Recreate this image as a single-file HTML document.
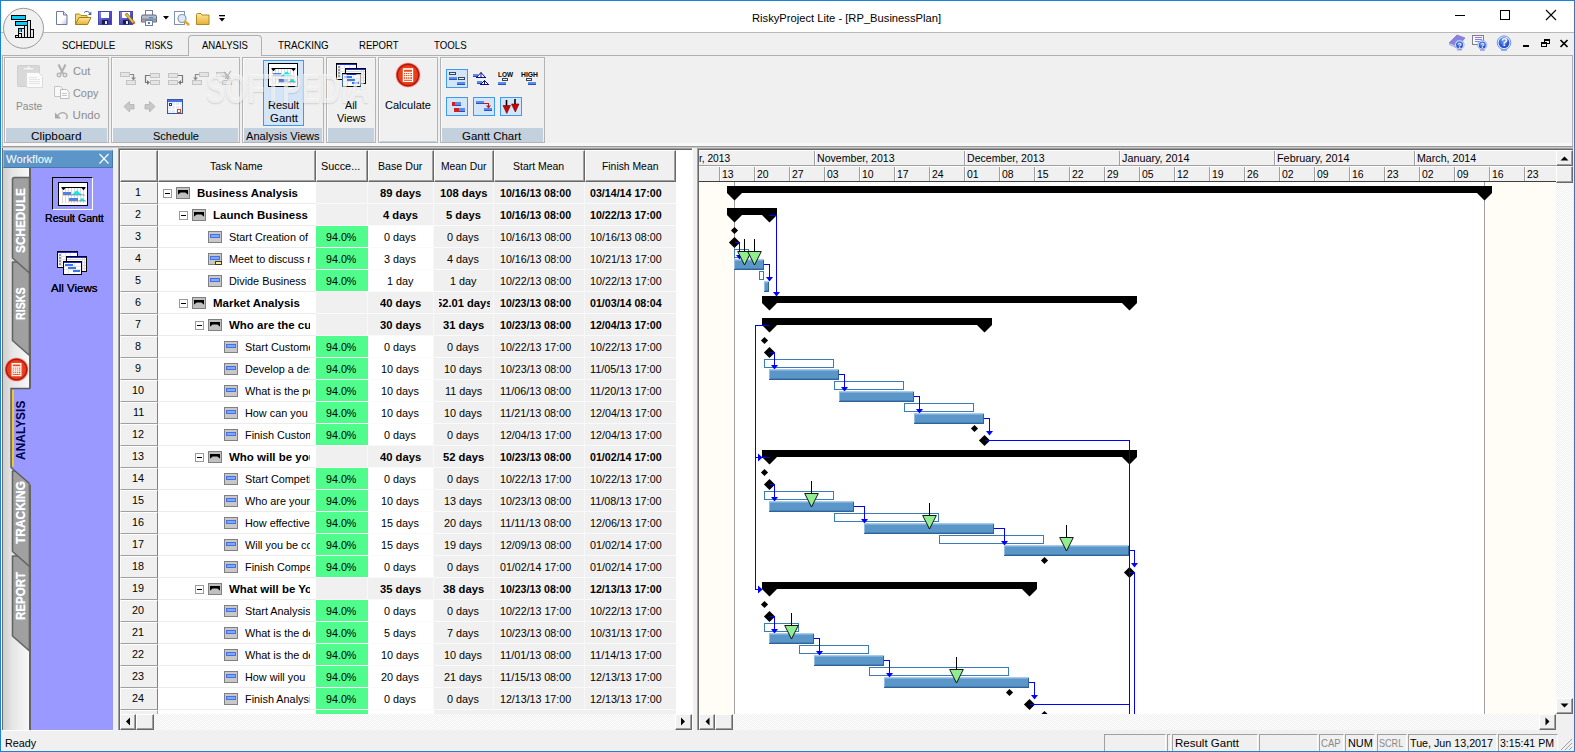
<!DOCTYPE html>
<html lang="en"><head><meta charset="utf-8"><title>RiskyProject Lite - [RP_BusinessPlan]</title>
<style>
html,body{margin:0;padding:0;background:#f0f0f0;}
body{width:1575px;height:752px;overflow:hidden;font-family:"Liberation Sans",sans-serif;}
#app{position:relative;width:1575px;height:752px;overflow:hidden;background:#f0f0f0;}
#app div,#app span.t,#app svg{position:absolute;box-sizing:border-box;}
span.t{white-space:pre;transform-origin:0 0;display:block;}
svg{overflow:visible;}
.grp{border:1px solid #b4b4b4;background:#f0f0f0;box-shadow:inset 1px 1px 0 #fafafa;}
.cap{background:#c3d0de;}
.hdr{background:#f0f0f0;border-top:1px solid #fff;border-left:1px solid #fff;border-right:1px solid #696969;border-bottom:1px solid #696969;box-shadow:inset -1px -1px 0 #a0a0a0;}
.rh{background:#f0f0f0;border-top:1px solid #fff;border-left:1px solid #fff;border-right:1px solid #808080;border-bottom:1px solid #a0a0a0;}
.sbtn{background:#f0f0f0;border-top:1px solid #fff;border-left:1px solid #fff;border-right:1px solid #696969;border-bottom:1px solid #696969;box-shadow:inset -1px -1px 0 #a0a0a0;}
.chk{background-color:#fff;background-image:linear-gradient(45deg,#f0f0f0 25%,transparent 25%,transparent 75%,#f0f0f0 75%),linear-gradient(45deg,#f0f0f0 25%,transparent 25%,transparent 75%,#f0f0f0 75%);background-size:2px 2px;background-position:0 0,1px 1px;}
.pane{border-top:1px solid #a0a0a0;border-left:1px solid #a0a0a0;border-right:1px solid #fff;border-bottom:1px solid #fff;}
.tg{background:#50fc8c;}
.hl{background:#d4e5f7;border:1px solid #3b9bf0;}

</style></head>
<body>
<div id="app">
<div style="left:0px;top:0px;width:1575px;height:752px;border:1px solid #1883d7;z-index:50;pointer-events:none;"></div>
<div style="left:1px;top:1px;width:1573px;height:31px;background:#fff;"></div>
<div style="left:1px;top:32px;width:1573px;height:1px;background:#b9b9b9;"></div>
<span class="t" style="left:752.00px;top:12.97px;font-size:11.5px;line-height:11.5px;color:#000;transform:scaleX(0.9727);">RiskyProject Lite - [RP_BusinessPlan]</span>
<svg style="left:1440px;top:1px" width="134" height="31" viewBox="0 0 134 31" shape-rendering="crispEdges">
<rect x="15" y="14" width="10" height="1" fill="#000"/>
<rect x="60.5" y="9.5" width="9" height="9" fill="none" stroke="#000"/>
<g shape-rendering="geometricPrecision" stroke="#000" stroke-width="1.1"><path d="M106 9 L116 19 M116 9 L106 19"/></g>
</svg>
<svg style="left:2px;top:6px" width="44" height="44" viewBox="0 0 44 44">
<circle cx="21.5" cy="22.3" r="20" fill="#f0f0f0" stroke="#9a9a9a" stroke-width="1"/>
<g shape-rendering="crispEdges">
<rect x="9.5" y="9.5" width="14" height="4" fill="#00d0ff" stroke="#000"/>
<rect x="13.5" y="15.5" width="12" height="4" fill="#00d0ff" stroke="#000"/>
<rect x="25.5" y="14.5" width="3" height="17" fill="#e4e4e4" stroke="#000"/>
<rect x="22.5" y="19.5" width="3" height="12" fill="#e4e4e4" stroke="#000"/>
<rect x="19.5" y="22.5" width="3" height="9" fill="#e4e4e4" stroke="#000"/>
<rect x="28.5" y="23.5" width="3" height="8" fill="#e4e4e4" stroke="#000"/>
<rect x="16.5" y="27.5" width="3" height="4" fill="#e4e4e4" stroke="#000"/>
<rect x="13.5" y="29.5" width="3" height="2" fill="#e4e4e4" stroke="#000"/>
<rect x="16.5" y="22.5" width="3" height="4" fill="#00d0ff" stroke="#000"/>
<rect x="17" y="26" width="3" height="1" fill="#f0f0f0"/>
</g></svg>
<svg style="left:54px;top:8px" width="176" height="22" viewBox="54 8 176 22">
<defs>
<linearGradient id="gdoc" x1="0" y1="0" x2="1" y2="1"><stop offset="0" stop-color="#fff"/><stop offset=".6" stop-color="#fff"/><stop offset="1" stop-color="#b8c0d8"/></linearGradient>
<linearGradient id="gfold" x1="0" y1="0" x2="0" y2="1"><stop offset="0" stop-color="#fce9a0"/><stop offset="1" stop-color="#e8b030"/></linearGradient>
<linearGradient id="gflop" x1="0" y1="0" x2="1" y2="1"><stop offset="0" stop-color="#8888e6"/><stop offset=".5" stop-color="#5656c8"/><stop offset="1" stop-color="#3434a4"/></linearGradient>
</defs>
<!-- new -->
<path d="M56.5 11.5 h7 l3.5 3.5 v9.5 h-10.5 z" fill="url(#gdoc)" stroke="#6e7aa0" stroke-width="1"/>
<path d="M63.5 11.5 v3.5 h3.5" fill="#dde" stroke="#5a6080" stroke-width=".8"/>
<!-- open -->
<path d="M75.5 24.5 v-10.5 h4 l1.5 1.5 h6 v3" fill="#f3d576" stroke="#b08820" stroke-width="1"/>
<path d="M75.5 24.5 l3.5 -7 h12 l-3.5 7 z" fill="url(#gfold)" stroke="#a87c18" stroke-width="1"/>
<path d="M84 12.5 q3.5 -3 6.5 1.5" fill="none" stroke="#4060a0" stroke-width="1"/>
<path d="M91.3 11.5 v3.5 h-3.3 z" fill="#4060a0"/>
<!-- save -->
<rect x="98.5" y="11.5" width="13" height="13" fill="url(#gflop)" stroke="#4848b4" stroke-width="1"/>
<rect x="101" y="12" width="8" height="6" fill="#fff"/>
<rect x="102" y="20" width="6" height="4.5" fill="#1c1c50"/>
<rect x="105" y="21" width="2" height="3" fill="#e8e8f0"/>
<!-- save as -->
<rect x="119.5" y="11.5" width="13" height="13" fill="url(#gflop)" stroke="#4848b4" stroke-width="1"/>
<rect x="122" y="12" width="8" height="6" fill="#fff"/>
<rect x="123" y="20" width="6" height="4.5" fill="#1c1c50"/>
<rect x="126" y="21" width="2" height="3" fill="#e8e8f0"/>
<path d="M125 14.5 l2 -1.5 l7.5 9 l-2 1.5 z" fill="#e8c040" stroke="#806010" stroke-width=".7"/>
<path d="M132.5 23.5 l2 -1.5 l.8 1 l-1.9 1.6 z" fill="#d04030"/>
<!-- print -->
<rect x="145.5" y="10.5" width="7" height="5" fill="#fff" stroke="#7080a0" stroke-width="1"/>
<path d="M141.500 16.5 q0 -1.500 1.500 -1.500 h12 q1.500 0 1.500 1.500 v5.500 h-15 z" fill="#b8bcc4" stroke="#606878" stroke-width="1"/>
<rect x="141.5" y="18.5" width="15" height="2" fill="#8a9098"/>
<rect x="149" y="17" width="4" height="1.300" fill="#3890ff"/>
<rect x="145.5" y="20.5" width="7" height="5" fill="#fff" stroke="#7080a0" stroke-width="1"/>
<rect x="148" y="22" width="2" height="2" fill="#4080ff"/>
<path d="M163 16 h6 l-3 3.500 z" fill="#000"/>
<!-- preview -->
<rect x="174.5" y="11.5" width="10" height="13" fill="#fff" stroke="#8090b0" stroke-width="1"/>
<circle cx="182" cy="18.5" r="4" fill="#d8ecff" stroke="#8898a8" stroke-width="1.200"/>
<path d="M185 21.500 l3.500 3" stroke="#e8a030" stroke-width="2.400" stroke-linecap="round"/>
<!-- folder -->
<path d="M196.500 24.500 v-10 q0 -1 1 -1 h3.500 l1 1.500 h7 v9.500 z" fill="url(#gfold)" stroke="#b08820" stroke-width="1"/>
<!-- customize -->
<rect x="219" y="15" width="6" height="1.300" fill="#000"/>
<path d="M219 18 h6 l-3 3.500 z" fill="#000"/>
</svg>
<div style="left:2px;top:55px;width:1571px;height:92px;background:#f0f0f0;border:1px solid #b0b0b0;border-bottom:none;"></div>
<div style="left:3px;top:143px;width:1569px;height:3px;background:#f7f7f7;"></div>
<div style="left:2px;top:146px;width:1571px;height:1px;background:#9a9a9a;"></div>
<div style="left:2px;top:147px;width:1571px;height:1px;background:#c8c8c8;"></div>
<div style="left:2px;top:148px;width:1571px;height:2px;background:#e4e4e4;"></div>
<div style="left:188px;top:35px;width:74px;height:21px;background:#f0f0f0;border:1px solid #b0b0b0;border-bottom:none;border-radius:4px 4px 0 0;"></div>
<span class="t" style="left:62.40px;top:40.37px;font-size:11.5px;line-height:11.5px;color:#000;transform:scaleX(0.8525);">SCHEDULE</span>
<span class="t" style="left:145.00px;top:40.37px;font-size:11.5px;line-height:11.5px;color:#000;transform:scaleX(0.7996);">RISKS</span>
<span class="t" style="left:202.00px;top:40.37px;font-size:11.5px;line-height:11.5px;color:#000;transform:scaleX(0.8302);">ANALYSIS</span>
<span class="t" style="left:278.00px;top:40.37px;font-size:11.5px;line-height:11.5px;color:#000;transform:scaleX(0.8515);">TRACKING</span>
<span class="t" style="left:359.40px;top:40.37px;font-size:11.5px;line-height:11.5px;color:#000;transform:scaleX(0.8299);">REPORT</span>
<span class="t" style="left:434.00px;top:40.37px;font-size:11.5px;line-height:11.5px;color:#000;transform:scaleX(0.8406);">TOOLS</span>
<svg style="left:1445px;top:33px" width="128" height="22" viewBox="1445 33 128 22">
<defs><radialGradient id="gq" cx=".45" cy=".35" r=".7"><stop offset="0" stop-color="#6a9cf4"/><stop offset="1" stop-color="#1038c0"/></radialGradient></defs>
<path d="M1449.500 42.500 v2 l7.500 3.500 l1 -2 z" fill="#cfc8f4" stroke="#8a80d0" stroke-width=".6"/><path d="M1449.500 42.500 l7.500 -7.500 l8 3 l-7 8 z" fill="#8c80dc" stroke="#7a6ed0" stroke-width=".7"/>
<circle cx="1459.500" cy="44.700" r="4.600" fill="#e8f0ff" stroke="#7aa0e8" stroke-width=".7"/><circle cx="1459.500" cy="44.700" r="3.500" fill="url(#gq)"/><rect x="1457" y="49.300" width="5" height="1" fill="#8a84d0"/>
<rect x="1472.500" y="35.500" width="11" height="9" fill="#f6f4ff" stroke="#808088" stroke-width="1"/>
<path d="M1475 37.500 h7 M1475 39.500 h7 M1475 41.500 h5" stroke="#8c80dc" stroke-width="1"/>
<circle cx="1482.300" cy="45" r="4.600" fill="#e8f0ff" stroke="#7aa0e8" stroke-width=".7"/><circle cx="1482.300" cy="45" r="3.500" fill="url(#gq)"/><rect x="1480" y="49.600" width="5" height="1" fill="#8a84d0"/>
<circle cx="1504" cy="42.700" r="6.800" fill="#e8f0ff" stroke="#5a8ae8" stroke-width=".9"/><circle cx="1504" cy="42.700" r="5.400" fill="url(#gq)"/><rect x="1501" y="49.600" width="6" height="1" fill="#5a8ae0"/>
<g shape-rendering="crispEdges">
<rect x="1523" y="45" width="6" height="2" fill="#000"/>
<rect x="1544.500" y="39.500" width="5" height="4" fill="none" stroke="#000"/><rect x="1544" y="39" width="6" height="2" fill="#000"/>
<rect x="1541.500" y="42.500" width="5" height="4" fill="#f0f0f0" stroke="#000"/><rect x="1541" y="42" width="6" height="2" fill="#000"/>
</g>
<path d="M1560.500 40 l7 7 M1567.500 40 l-7 7" stroke="#000" stroke-width="1.700"/>
</svg>
<span class="t" style="left:1457.50px;top:41.57px;font-size:7px;line-height:7px;color:#fff;font-weight:bold;">?</span>
<span class="t" style="left:1480.20px;top:41.87px;font-size:7px;line-height:7px;color:#fff;font-weight:bold;">?</span>
<span class="t" style="left:1500.90px;top:37.29px;font-size:11px;line-height:11px;color:#fff;font-weight:bold;">?</span>
<div class="grp" style="left:4px;top:57px;width:105px;height:86px;"></div>
<div class="cap" style="left:6px;top:128px;width:101px;height:14px;"></div>
<span class="t" style="left:31.40px;top:130.97px;font-size:11.5px;line-height:11.5px;color:#000;transform:scaleX(1.0277);">Clipboard</span>
<div class="grp" style="left:111px;top:57px;width:129px;height:86px;"></div>
<div class="cap" style="left:113px;top:128px;width:125px;height:14px;"></div>
<span class="t" style="left:152.60px;top:130.97px;font-size:11.5px;line-height:11.5px;color:#000;transform:scaleX(0.9590);">Schedule</span>
<div class="grp" style="left:242px;top:57px;width:82px;height:86px;"></div>
<div class="cap" style="left:244px;top:128px;width:78px;height:14px;"></div>
<span class="t" style="left:246.00px;top:130.97px;font-size:11.5px;line-height:11.5px;color:#000;transform:scaleX(0.9621);">Analysis Views</span>
<div class="grp" style="left:326px;top:57px;width:50px;height:86px;"></div>
<div class="cap" style="left:328px;top:128px;width:46px;height:14px;"></div>
<div class="grp" style="left:378px;top:57px;width:60px;height:86px;"></div>
<div style="left:380px;top:141px;width:56px;height:1px;background:#c3d0de;"></div>
<div class="grp" style="left:440px;top:57px;width:105px;height:86px;"></div>
<div class="cap" style="left:442px;top:128px;width:101px;height:14px;"></div>
<span class="t" style="left:462.40px;top:130.97px;font-size:11.5px;line-height:11.5px;color:#000;transform:scaleX(0.9957);">Gantt Chart</span>
<span class="t" style="left:16.40px;top:100.57px;font-size:11.5px;line-height:11.5px;color:#8c8c8c;transform:scaleX(0.8905);">Paste</span>
<span class="t" style="left:72.60px;top:66.27px;font-size:11.5px;line-height:11.5px;color:#8c8c8c;transform:scaleX(0.9717);">Cut</span>
<span class="t" style="left:72.60px;top:88.27px;font-size:11.5px;line-height:11.5px;color:#8c8c8c;transform:scaleX(0.9457);">Copy</span>
<span class="t" style="left:72.60px;top:110.27px;font-size:11.5px;line-height:11.5px;color:#8c8c8c;">Undo</span>
<svg style="left:14px;top:60px" width="60" height="62" viewBox="14 60 60 62">
<rect x="17.500" y="65.500" width="22" height="21" rx="1" fill="#d9d9d9" stroke="#cfcfcf"/>
<path d="M23 67.500 h4 q1.500 -4 3 0 h4 v2.500 h-11 z" fill="#f4f4f4" stroke="#d0d0d0" stroke-width=".8"/>
<path d="M26.500 72.500 h12 l4 4 v11 h-16 z" fill="#fbfbfb" stroke="#dcdcdc" stroke-width="1"/>
<path d="M29 77.500 h8 M29 79.500 h11 M29 81.500 h11 M29 83.500 h11" stroke="#e4e4e4" stroke-width="1"/>
<!-- cut -->
<path d="M58.500 64.500 l4.500 9 M65.500 64.500 l-4.500 9" stroke="#b0b0b0" stroke-width="2.100" fill="none"/>
<circle cx="59" cy="75" r="1.800" fill="none" stroke="#b4b4b4" stroke-width="1.400"/>
<circle cx="65" cy="75" r="1.800" fill="none" stroke="#b4b4b4" stroke-width="1.400"/>
<!-- copy -->
<path d="M54.500 86.500 h6 l2.500 2.500 v7.500 h-8.500 z" fill="#f8f8f8" stroke="#c4c4c4"/>
<path d="M60.500 89.500 h6 l2.500 2.500 v6.500 h-8.500 z" fill="#fbfbfb" stroke="#bcbcbc"/>
<path d="M62 93.500 h5 M62 95.500 h5" stroke="#c8c8c8"/>
<!-- undo -->
<path d="M57 116.500 q4 -6 9 -2.500 q2.500 2.500 0 5" fill="none" stroke="#a8a8a8" stroke-width="1.300"/>
<path d="M55 112.500 v6 h6 z" fill="#a8a8a8"/>
</svg>
<svg style="left:111px;top:57px" width="130" height="70" viewBox="111 57 130 70"><rect x="120.5" y="72.5" width="9" height="4" fill="#e4e4e4" stroke="#c4c4c4"/><rect x="126.5" y="80.5" width="9" height="4" fill="#e4e4e4" stroke="#c4c4c4"/><path d="M130 74.500 h3.500 v4" fill="none" stroke="#8a8a8a" stroke-width="1.200"/><path d="M131 77.500 h5 l-2.500 3 z" fill="#8a8a8a"/><rect x="150.5" y="73.5" width="9" height="4" fill="#e4e4e4" stroke="#c4c4c4"/><rect x="150.5" y="80.5" width="9" height="4" fill="#e4e4e4" stroke="#c4c4c4"/><path d="M150 75.500 h-4.500 v7 h2" fill="none" stroke="#7a7a7a" stroke-width="1.200"/><path d="M147 80 v5 l3 -2.500 z" fill="#7a7a7a"/><rect x="168.5" y="73.5" width="9" height="4" fill="#e4e4e4" stroke="#c4c4c4"/><rect x="168.5" y="80.5" width="9" height="4" fill="#e4e4e4" stroke="#c4c4c4"/><path d="M178 75.500 h4.500 v7 h-2" fill="none" stroke="#7a7a7a" stroke-width="1.200"/><path d="M181 80 v5 l-3 -2.500 z" fill="#7a7a7a"/><rect x="199.5" y="72.5" width="9" height="4" fill="#e4e4e4" stroke="#c4c4c4"/><rect x="192.5" y="80.5" width="9" height="4" fill="#e4e4e4" stroke="#c4c4c4"/><path d="M199 74.500 h-3.500 v4" fill="none" stroke="#8a8a8a" stroke-width="1.200"/><path d="M193 77.500 h5 l-2.500 3 z" fill="#8a8a8a"/><rect x="216.5" y="72.5" width="9" height="4" fill="#e4e4e4" stroke="#c4c4c4"/><rect x="222.5" y="80.5" width="9" height="4" fill="#e4e4e4" stroke="#c4c4c4"/><path d="M224 72 l7 7 M231 71 l-6 8" stroke="#b0b0b0" stroke-width="1.200"/><path d="M226 77.500 h5 l-2.500 3 z" fill="#9a9a9a"/><path d="M124 106.500 l5.500 -5 v3 h4.500 v4.500 h-4.500 v3 z" fill="#c8c8c8" stroke="#b0b0b0" stroke-width=".8"/><path d="M155 106.500 l-5.500 -5 v3 h-4.500 v4.500 h4.500 v3 z" fill="#c8c8c8" stroke="#b0b0b0" stroke-width=".8"/><g shape-rendering="crispEdges"><rect x="167.500" y="99.500" width="15" height="14" fill="#e4ecf8" stroke="#3858a0"/><rect x="168" y="100" width="14" height="2" fill="#4a74e0"/><path d="M168 105.500 h14 M168 109.500 h14 M171.500 102 v11 M175.500 102 v11 M179.500 102 v11" stroke="#fff"/><rect x="169.500" y="103.500" width="2" height="2" fill="#fff" stroke="#1c3a90"/><rect x="177.500" y="109.500" width="3" height="3" fill="#fff" stroke="#e04818"/></g></svg>
<div class="hl" style="left:263px;top:60px;width:41px;height:66px;"></div>
<svg style="left:268px;top:63px" width="30" height="24" viewBox="0 0 30 24" shape-rendering="crispEdges"><rect x=".5" y=".5" width="29" height="23" fill="#fff" stroke="#000"/><path d="M4.500 6 v15 M7.500 6 v15 M10.500 6 v15 M13.500 6 v15 M16.500 6 v15 M19.500 6 v15 M22.500 6 v15 M25.500 6 v15" stroke="#dadada"/><path d="M3.500 5 h24 v1 l-2 2.300 l-2 -2.300 h-16 l-2 2.300 l-2 -2.300 z" fill="#000" shape-rendering="geometricPrecision"/><rect x="5" y="10" width="8" height="3" fill="#4a80ec"/><path d="M13 13 l3 -2 l2 -2.300 h1.500 l2 2.300 l3.500 2 z" fill="#00f0f0" shape-rendering="geometricPrecision"/><path d="M5 13 h22" stroke="#a08078" stroke-width=".7" shape-rendering="geometricPrecision"/><rect x="11" y="16" width="9" height="3" fill="#4a80ec"/><path d="M21 19 l3 -3.300 l3.500 3.300 z" fill="#00f0f0" shape-rendering="geometricPrecision"/><path d="M11 19 h17" stroke="#a08078" stroke-width=".7" shape-rendering="geometricPrecision"/></svg>
<span class="t" style="left:267.60px;top:100.47px;font-size:11.5px;line-height:11.5px;color:#000;transform:scaleX(0.9506);">Result</span>
<span class="t" style="left:270.00px;top:113.47px;font-size:11.5px;line-height:11.5px;color:#000;transform:scaleX(0.9950);">Gantt</span>
<svg style="left:336px;top:63px" width="31" height="25" viewBox="0 0 31 25" shape-rendering="crispEdges"><rect x="0.5" y="0.5" width="20" height="16" fill="#fff" stroke="#000"/><rect x="1" y="1" width="19" height="1" fill="#1c2ce8"/><path d="M1 5.500 h19 M1 8.500 h19 M1 11.500 h19 M1 14.500 h19 M4.500 2 v14 M8.500 2 v14 M13.500 2 v14" stroke="#e4e4e4"/><path d="M2 3.500 h2 M2 6.500 h2 M2 9.500 h2 M2 12.500 h2" stroke="#9a9a9a" stroke-width="2"/><rect x="9.5" y="5.5" width="20" height="15" fill="#fff" stroke="#000"/><rect x="10" y="6" width="19" height="1" fill="#1c2ce8"/><path d="M10 8.500 h19 M10 11.500 h19 M10 14.500 h19 M10 17.500 h19 M27.500 7 v13 M25.500 7 v13" stroke="#dcdcdc"/><rect x="6.5" y="10.5" width="18" height="13" fill="#fff" stroke="#000"/><rect x="7" y="11" width="17" height="1" fill="#1c2ce8"/><path d="M7 15.500 h17 M7 18.500 h17 M11.500 12 v11 M17.500 12 v11" stroke="#e4e4e4"/><rect x="8" y="13" width="8" height="2" fill="#3a78e8"/><rect x="11" y="16" width="8" height="2" fill="#3a78e8"/><rect x="16" y="19" width="7" height="2" fill="#3a78e8"/></svg>
<span class="t" style="left:345.00px;top:100.47px;font-size:11.5px;line-height:11.5px;color:#000;transform:scaleX(0.9389);">All</span>
<span class="t" style="left:336.60px;top:113.47px;font-size:11.5px;line-height:11.5px;color:#000;transform:scaleX(0.9452);">Views</span>
<svg style="left:394.2px;top:61px" width="28" height="28" viewBox="-14 -14 28 28"><defs><radialGradient id="gca" cx=".5" cy=".5" r=".5"><stop offset="0" stop-color="#ee5420"/><stop offset=".78" stop-color="#e63c18"/><stop offset=".89" stop-color="#a81010"/><stop offset=".95" stop-color="#d83a30"/><stop offset="1" stop-color="#e8685c"/></radialGradient></defs><circle cx="0" cy="0" r="12.8" fill="#f4b8b0" opacity=".6"/><circle cx="0" cy="0" r="12" fill="url(#gca)"/><g transform="scale(1.0)"><rect x="-5.200" y="-6.800" width="10.400" height="13.800" fill="#fff"/><rect x="-4" y="-5.300" width="8" height="2" rx=".6" fill="#ec4a18"/><rect x="-4" y="-2" width="1.200" height="1.1" fill="#ec4a18"/><rect x="-1.9" y="-2" width="1.200" height="1.1" fill="#ec4a18"/><rect x="0.2" y="-2" width="1.200" height="1.1" fill="#ec4a18"/><rect x="2.300" y="-2" width="1.800" height="1.1" fill="#ec4a18"/><rect x="-4" y="0" width="1.200" height="1.1" fill="#ec4a18"/><rect x="-1.9" y="0" width="1.200" height="1.1" fill="#ec4a18"/><rect x="0.2" y="0" width="1.200" height="1.1" fill="#ec4a18"/><rect x="2.300" y="0" width="1.800" height="1.1" fill="#ec4a18"/><rect x="-4" y="2.2" width="1.200" height="1.7" fill="#ec4a18"/><rect x="-1.9" y="2.2" width="1.200" height="1.7" fill="#ec4a18"/><rect x="0.2" y="2.2" width="1.200" height="1.7" fill="#ec4a18"/><rect x="2.300" y="2.2" width="1.800" height="1.7" fill="#ec4a18"/><rect x="-4" y="4.800" width="8" height="1" fill="#ec4a18"/></g></svg>
<span class="t" style="left:385.40px;top:100.47px;font-size:11.5px;line-height:11.5px;color:#000;transform:scaleX(0.9593);">Calculate</span>
<div class="hl" style="left:446px;top:69px;width:22px;height:19px;"></div>
<div class="hl" style="left:446px;top:97px;width:22px;height:19px;"></div>
<div class="hl" style="left:473px;top:97px;width:22px;height:19px;"></div>
<div class="hl" style="left:500px;top:97px;width:22px;height:19px;"></div>
<svg style="left:440px;top:57px" width="105" height="70" viewBox="440 57 105 70" shape-rendering="crispEdges"><rect x="449.5" y="72.5" width="6" height="2" fill="#e8f0f8" stroke="#304860"/><rect x="449" y="77" width="8" height="3" fill="#5a8cf0"/><rect x="449" y="79" width="8" height="1" fill="#2a50c0"/><rect x="458.5" y="77.5" width="6" height="2" fill="#e8f0f8" stroke="#304860"/><rect x="457" y="82" width="8" height="3" fill="#5a8cf0"/><rect x="457" y="84" width="8" height="1" fill="#2a50c0"/><rect x="473" y="74" width="5" height="3" fill="#5a8cf0"/><rect x="473" y="76" width="5" height="1" fill="#2a50c0"/><path d="M476 77.500 h10 M476.500 77.500 l4.500 -5 l4.500 5 M481 72.500 v5" fill="#fff" stroke="#0a0a90" stroke-width="1" shape-rendering="geometricPrecision"/><rect x="477" y="81" width="5" height="3" fill="#5a8cf0"/><rect x="477" y="83" width="5" height="1" fill="#2a50c0"/><path d="M480 84.500 h9 M480.500 84.500 l4 -4 l4 4 M484.500 80.500 v4" fill="#fff" stroke="#0a0a90" stroke-width="1" shape-rendering="geometricPrecision"/><rect x="502.5" y="78.5" width="5" height="2" fill="#e8f0f8" stroke="#304860"/><rect x="498" y="82" width="8" height="3" fill="#5a8cf0"/><rect x="498" y="84" width="8" height="1" fill="#2a50c0"/><rect x="526.5" y="78.5" width="5" height="2" fill="#e8f0f8" stroke="#304860"/><rect x="528" y="82" width="8" height="3" fill="#5a8cf0"/><rect x="528" y="84" width="8" height="1" fill="#2a50c0"/><rect x="452" y="102" width="3" height="4" fill="#d02020"/><rect x="455" y="102" width="6" height="4" fill="#5a8cf0"/><rect x="455" y="105" width="6" height="1" fill="#2a50c0"/><rect x="454" y="108" width="5" height="4" fill="#d02020"/><rect x="459" y="108" width="6" height="4" fill="#5a8cf0"/><rect x="459" y="111" width="6" height="1" fill="#2a50c0"/><rect x="476" y="101" width="8" height="3" fill="#5a8cf0"/><rect x="476" y="103" width="8" height="1" fill="#2a50c0"/><rect x="484" y="108" width="8" height="3" fill="#5a8cf0"/><rect x="484" y="110" width="8" height="1" fill="#2a50c0"/><path d="M484 103.500 h4.500 v3" fill="none" stroke="#c01818" stroke-width="1.200"/><path d="M486 105.500 h5 l-2.500 3 z" fill="#c01818" shape-rendering="geometricPrecision"/><g shape-rendering="geometricPrecision"><path d="M506.500 100 v6" stroke="#000" stroke-width="1.600"/><path d="M503 105.500 h7.500 l-3.700 8 z" fill="#d00000" stroke="#600000" stroke-width=".6"/><path d="M515 99 v6" stroke="#000" stroke-width="1.600"/><path d="M511.500 104 h7.500 l-3.700 8 z" fill="#d00000" stroke="#600000" stroke-width=".6"/></g></svg>
<span class="t" style="left:497.50px;top:71.07px;font-size:7px;line-height:7px;color:#000;font-weight:bold;transform:scaleX(0.9187);">LOW</span>
<span class="t" style="left:520.50px;top:71.07px;font-size:7px;line-height:7px;color:#000;font-weight:bold;transform:scaleX(0.9714);">HIGH</span>
<span class="t" style="left:206.00px;top:68.45px;font-size:42px;line-height:42px;color:rgba(255,255,255,.68);font-weight:bold;transform:scaleX(0.6782);text-shadow:0 1px 2px rgba(0,0,0,.13);z-index:5;">SOFTPEDIA</span>
<div style="left:1px;top:150px;width:2px;height:580px;background:#fff;"></div>
<div style="left:2px;top:148px;width:1px;height:582px;background:#6e6e6e;"></div>
<div style="left:3px;top:150px;width:110px;height:18px;background:#5c95c8;border-top:1px solid #8ab8e0;border-left:1px solid #8ab8e0;border-right:1px solid #4478a8;border-bottom:1px solid #4478a8;"></div>
<span class="t" style="left:6.20px;top:153.97px;font-size:11.5px;line-height:11.5px;color:#fff;transform:scaleX(0.9813);">Workflow</span>
<svg style="left:98px;top:153px" width="12" height="12" viewBox="0 0 12 12"><path d="M1.500 1 l9 9.500 M10.500 1 l-9 9.500" stroke="#fff" stroke-width="1.100"/></svg>
<div style="left:3px;top:168px;width:27px;height:562px;background:linear-gradient(90deg,#cfcfcf 0,#e6e6e6 35%,#f9f9f9 100%);"></div>
<div style="left:29px;top:168px;width:2px;height:562px;background:#646464;"></div>
<div style="left:31px;top:168px;width:82px;height:562px;background:#9999ff;"></div>
<div style="left:1px;top:730px;width:117px;height:1px;background:#fff;"></div>
<svg style="left:0;top:168px" width="34" height="563" viewBox="0 168 34 563"><path d="M12.500 556 H29.500 V651 L12.500 636 Z" fill="#a0a0a0" stroke="#646464" stroke-width="1.600" stroke-linejoin="round"/><path d="M12.500 471 H29.500 V566.5 L12.500 551.5 Z" fill="#a0a0a0" stroke="#646464" stroke-width="1.600" stroke-linejoin="round"/><path d="M12.500 262 H29.500 V355.5 L12.500 340.5 Z" fill="#a0a0a0" stroke="#646464" stroke-width="1.600" stroke-linejoin="round"/><path d="M29.500 177.5 H14.500 Q12.500 177.5 12.500 179.5 V258 L29.500 273 Z" fill="#a0a0a0" stroke="#646464" stroke-width="1.600" stroke-linejoin="round"/><path d="M3 357 L13 342 L29 356.500 V388 H3 Z" fill="none"/><path d="M31 388.500 H11 V467.500 L31 485 Z" fill="#9999ff"/><path d="M30 388.500 H11 V467.500 L29.500 483.500" fill="none" stroke="#5a5a5a" stroke-width="1.400"/><rect x="12" y="390" width="2" height="76.500" fill="#f0c828"/></svg>
<svg style="left:2.6999999999999993px;top:356.1px" width="27.0" height="27.0" viewBox="-13.5 -13.5 27.0 27.0"><defs><radialGradient id="gcb" cx=".5" cy=".5" r=".5"><stop offset="0" stop-color="#ee5420"/><stop offset=".78" stop-color="#e63c18"/><stop offset=".89" stop-color="#a81010"/><stop offset=".95" stop-color="#d83a30"/><stop offset="1" stop-color="#e8685c"/></radialGradient></defs><circle cx="0" cy="0" r="12.3" fill="#f4b8b0" opacity=".6"/><circle cx="0" cy="0" r="11.5" fill="url(#gcb)"/><g transform="scale(0.9583333333333334)"><rect x="-5.200" y="-6.800" width="10.400" height="13.800" fill="#fff"/><rect x="-4" y="-5.300" width="8" height="2" rx=".6" fill="#ec4a18"/><rect x="-4" y="-2" width="1.200" height="1.1" fill="#ec4a18"/><rect x="-1.9" y="-2" width="1.200" height="1.1" fill="#ec4a18"/><rect x="0.2" y="-2" width="1.200" height="1.1" fill="#ec4a18"/><rect x="2.300" y="-2" width="1.800" height="1.1" fill="#ec4a18"/><rect x="-4" y="0" width="1.200" height="1.1" fill="#ec4a18"/><rect x="-1.9" y="0" width="1.200" height="1.1" fill="#ec4a18"/><rect x="0.2" y="0" width="1.200" height="1.1" fill="#ec4a18"/><rect x="2.300" y="0" width="1.800" height="1.1" fill="#ec4a18"/><rect x="-4" y="2.2" width="1.200" height="1.7" fill="#ec4a18"/><rect x="-1.9" y="2.2" width="1.200" height="1.7" fill="#ec4a18"/><rect x="0.2" y="2.2" width="1.200" height="1.7" fill="#ec4a18"/><rect x="2.300" y="2.2" width="1.800" height="1.7" fill="#ec4a18"/><rect x="-4" y="4.800" width="8" height="1" fill="#ec4a18"/></g></svg>
<span class="t" style="left:24.70px;top:253.00px;font-size:13px;line-height:13px;color:#fff;font-weight:bold;transform-origin:0 0;transform:rotate(-90deg) scaleX(0.9089) translateY(-11.00px);text-shadow:0 0 1px #d8e4ff;">SCHEDULE</span>
<span class="t" style="left:24.70px;top:319.50px;font-size:13px;line-height:13px;color:#fff;font-weight:bold;transform-origin:0 0;transform:rotate(-90deg) scaleX(0.8179) translateY(-11.00px);text-shadow:0 0 1px #d8e4ff;">RISKS</span>
<span class="t" style="left:24.70px;top:460.00px;font-size:13px;line-height:13px;color:#000048;font-weight:bold;transform-origin:0 0;transform:rotate(-90deg) scaleX(0.9203) translateY(-11.00px);">ANALYSIS</span>
<span class="t" style="left:24.70px;top:544.00px;font-size:13px;line-height:13px;color:#fff;font-weight:bold;transform-origin:0 0;transform:rotate(-90deg) scaleX(0.9182) translateY(-11.00px);text-shadow:0 0 1px #d8e4ff;">TRACKING</span>
<span class="t" style="left:24.70px;top:620.00px;font-size:13px;line-height:13px;color:#fff;font-weight:bold;transform-origin:0 0;transform:rotate(-90deg) scaleX(0.8861) translateY(-11.00px);text-shadow:0 0 1px #d8e4ff;">REPORT</span>
<div style="left:52px;top:177px;width:41px;height:33px;border-top:1px solid #000;border-left:1px solid #000;border-right:1px solid #fff;border-bottom:1px solid #fff;"></div>
<svg style="left:58px;top:182px" width="30" height="24" viewBox="0 0 30 24" shape-rendering="crispEdges"><rect x=".5" y=".5" width="29" height="23" fill="#fff" stroke="#000"/><path d="M4.500 6 v15 M7.500 6 v15 M10.500 6 v15 M13.500 6 v15 M16.500 6 v15 M19.500 6 v15 M22.500 6 v15 M25.500 6 v15" stroke="#dadada"/><path d="M3.500 5 h24 v1 l-2 2.300 l-2 -2.300 h-16 l-2 2.300 l-2 -2.300 z" fill="#000" shape-rendering="geometricPrecision"/><rect x="5" y="10" width="8" height="3" fill="#4a80ec"/><path d="M13 13 l3 -2 l2 -2.300 h1.500 l2 2.300 l3.500 2 z" fill="#00f0f0" shape-rendering="geometricPrecision"/><path d="M5 13 h22" stroke="#a08078" stroke-width=".7" shape-rendering="geometricPrecision"/><rect x="11" y="16" width="9" height="3" fill="#4a80ec"/><path d="M21 19 l3 -3.300 l3.500 3.300 z" fill="#00f0f0" shape-rendering="geometricPrecision"/><path d="M11 19 h17" stroke="#a08078" stroke-width=".7" shape-rendering="geometricPrecision"/></svg>
<span class="t" style="left:45.20px;top:212.69px;font-size:11px;line-height:11px;color:#000;transform:scaleX(0.9617);text-shadow:0 0 .4px #000;">Result Gantt</span>
<svg style="left:57px;top:251px" width="31" height="25" viewBox="0 0 31 25" shape-rendering="crispEdges"><rect x="0.5" y="0.5" width="20" height="16" fill="#fff" stroke="#000"/><rect x="1" y="1" width="19" height="1" fill="#1c2ce8"/><path d="M1 5.500 h19 M1 8.500 h19 M1 11.500 h19 M1 14.500 h19 M4.500 2 v14 M8.500 2 v14 M13.500 2 v14" stroke="#e4e4e4"/><path d="M2 3.500 h2 M2 6.500 h2 M2 9.500 h2 M2 12.500 h2" stroke="#9a9a9a" stroke-width="2"/><rect x="9.5" y="5.5" width="20" height="15" fill="#fff" stroke="#000"/><rect x="10" y="6" width="19" height="1" fill="#1c2ce8"/><path d="M10 8.500 h19 M10 11.500 h19 M10 14.500 h19 M10 17.500 h19 M27.500 7 v13 M25.500 7 v13" stroke="#dcdcdc"/><rect x="6.5" y="10.5" width="18" height="13" fill="#fff" stroke="#000"/><rect x="7" y="11" width="17" height="1" fill="#1c2ce8"/><path d="M7 15.500 h17 M7 18.500 h17 M11.500 12 v11 M17.500 12 v11" stroke="#e4e4e4"/><rect x="8" y="13" width="8" height="2" fill="#3a78e8"/><rect x="11" y="16" width="8" height="2" fill="#3a78e8"/><rect x="16" y="19" width="7" height="2" fill="#3a78e8"/></svg>
<span class="t" style="left:51.40px;top:282.69px;font-size:11px;line-height:11px;color:#000;transform:scaleX(1.0487);text-shadow:0 0 .4px #000;">All Views</span>
<div style="left:113px;top:148px;width:6px;height:583px;background:#f0f0f0;"></div>
<div style="left:118px;top:148px;width:574px;height:1px;background:#a0a0a0;"></div>
<div style="left:118px;top:148px;width:1px;height:582px;background:#a0a0a0;"></div>
<div style="left:119px;top:149px;width:573px;height:1px;background:#696969;"></div>
<div style="left:119px;top:150px;width:573px;height:564px;background:#fff;"></div>
<div style="left:119px;top:149px;width:1px;height:581px;background:#696969;"></div>
<div class="hdr" style="left:120px;top:150px;width:38px;height:32px;"></div>
<div class="hdr" style="left:158px;top:150px;width:158px;height:32px;"></div>
<div class="hdr" style="left:316px;top:150px;width:52px;height:32px;"></div>
<div class="hdr" style="left:368px;top:150px;width:66px;height:32px;"></div>
<div class="hdr" style="left:434px;top:150px;width:60px;height:32px;"></div>
<div class="hdr" style="left:494px;top:150px;width:91px;height:32px;"></div>
<div class="hdr" style="left:585px;top:150px;width:91px;height:32px;"></div>
<span class="t" style="left:210.40px;top:161.09px;font-size:11px;line-height:11px;color:#000;transform:scaleX(0.9558);">Task Name</span>
<span class="t" style="left:321.20px;top:161.09px;font-size:11px;line-height:11px;color:#000;transform:scaleX(0.9862);">Succe...</span>
<span class="t" style="left:378.40px;top:161.09px;font-size:11px;line-height:11px;color:#000;transform:scaleX(0.9682);">Base Dur</span>
<span class="t" style="left:441.20px;top:161.09px;font-size:11px;line-height:11px;color:#000;transform:scaleX(0.9400);">Mean Dur</span>
<span class="t" style="left:513.40px;top:161.09px;font-size:11px;line-height:11px;color:#000;transform:scaleX(0.9515);">Start Mean</span>
<span class="t" style="left:602.20px;top:161.09px;font-size:11px;line-height:11px;color:#000;transform:scaleX(0.9412);">Finish Mean</span>
<div class="rh" style="left:120px;top:182px;width:38px;height:22px;"></div>
<span class="t" style="left:135.20px;top:187.09px;font-size:11px;line-height:11px;color:#000;transform:scaleX(0.9800);">1</span>
<div style="left:316px;top:182px;width:52px;height:21px;background:#f0f0f0;"></div>
<div style="left:368px;top:182px;width:66px;height:21px;background:#f0f0f0;"></div>
<div style="left:434px;top:182px;width:60px;height:21px;background:#f0f0f0;overflow:hidden;"></div>
<div style="left:494px;top:182px;width:91px;height:21px;background:#f0f0f0;"></div>
<div style="left:585px;top:182px;width:91px;height:21px;background:#f0f0f0;"></div>
<div style="left:158px;top:203px;width:158px;height:1px;background:#ececec;"></div>
<div style="left:316px;top:203px;width:360px;height:1px;background:#fafafa;"></div>
<div style="left:367px;top:182px;width:1px;height:21px;background:#f8f8f8;"></div>
<div style="left:433px;top:182px;width:1px;height:21px;background:#f8f8f8;"></div>
<div style="left:493px;top:182px;width:1px;height:21px;background:#f8f8f8;"></div>
<div style="left:584px;top:182px;width:1px;height:21px;background:#f8f8f8;"></div>
<div style="left:158px;top:182px;width:152px;height:21px;overflow:hidden;">
<span class="t" style="left:39.40px;top:5.69px;font-size:11px;line-height:11px;color:#000;font-weight:bold;transform:scaleX(1.0430);">Business Analysis</span>
</div>
<span class="t" style="left:379.81px;top:187.69px;font-size:11px;line-height:11px;color:#000;font-weight:bold;transform:scaleX(1.0200);">89 days</span>
<span class="t" style="left:439.59px;top:187.69px;font-size:11px;line-height:11px;color:#000;font-weight:bold;transform:scaleX(1.0200);">108 days</span>
<span class="t" style="left:499.50px;top:187.69px;font-size:11px;line-height:11px;color:#000;font-weight:bold;transform:scaleX(0.9606);">10/16/13 08:00</span>
<span class="t" style="left:590.00px;top:187.69px;font-size:11px;line-height:11px;color:#000;font-weight:bold;transform:scaleX(0.9674);">03/14/14 17:00</span>
<div class="rh" style="left:120px;top:204px;width:38px;height:22px;"></div>
<span class="t" style="left:135.20px;top:209.09px;font-size:11px;line-height:11px;color:#000;transform:scaleX(0.9800);">2</span>
<div style="left:316px;top:204px;width:52px;height:21px;background:#f0f0f0;"></div>
<div style="left:368px;top:204px;width:66px;height:21px;background:#f0f0f0;"></div>
<div style="left:434px;top:204px;width:60px;height:21px;background:#f0f0f0;overflow:hidden;"></div>
<div style="left:494px;top:204px;width:91px;height:21px;background:#f0f0f0;"></div>
<div style="left:585px;top:204px;width:91px;height:21px;background:#f0f0f0;"></div>
<div style="left:158px;top:225px;width:158px;height:1px;background:#ececec;"></div>
<div style="left:316px;top:225px;width:360px;height:1px;background:#fafafa;"></div>
<div style="left:367px;top:204px;width:1px;height:21px;background:#f8f8f8;"></div>
<div style="left:433px;top:204px;width:1px;height:21px;background:#f8f8f8;"></div>
<div style="left:493px;top:204px;width:1px;height:21px;background:#f8f8f8;"></div>
<div style="left:584px;top:204px;width:1px;height:21px;background:#f8f8f8;"></div>
<div style="left:158px;top:204px;width:152px;height:21px;overflow:hidden;">
<span class="t" style="left:55.40px;top:5.69px;font-size:11px;line-height:11px;color:#000;font-weight:bold;transform:scaleX(1.0430);">Launch Business Plan</span>
</div>
<span class="t" style="left:382.93px;top:209.69px;font-size:11px;line-height:11px;color:#000;font-weight:bold;transform:scaleX(1.0200);">4 days</span>
<span class="t" style="left:445.83px;top:209.69px;font-size:11px;line-height:11px;color:#000;font-weight:bold;transform:scaleX(1.0200);">5 days</span>
<span class="t" style="left:499.50px;top:209.69px;font-size:11px;line-height:11px;color:#000;font-weight:bold;transform:scaleX(0.9606);">10/16/13 08:00</span>
<span class="t" style="left:590.00px;top:209.69px;font-size:11px;line-height:11px;color:#000;font-weight:bold;transform:scaleX(0.9674);">10/22/13 17:00</span>
<div class="rh" style="left:120px;top:226px;width:38px;height:22px;"></div>
<span class="t" style="left:135.20px;top:231.09px;font-size:11px;line-height:11px;color:#000;transform:scaleX(0.9800);">3</span>
<div style="left:316px;top:226px;width:52px;height:21px;background:#50fc8c;"></div>
<div style="left:368px;top:226px;width:66px;height:21px;background:#fff;"></div>
<div style="left:434px;top:226px;width:60px;height:21px;background:#f0f0f0;overflow:hidden;"></div>
<div style="left:494px;top:226px;width:91px;height:21px;background:#f0f0f0;"></div>
<div style="left:585px;top:226px;width:91px;height:21px;background:#f0f0f0;"></div>
<div style="left:158px;top:247px;width:158px;height:1px;background:#ececec;"></div>
<div style="left:316px;top:247px;width:360px;height:1px;background:#fafafa;"></div>
<div style="left:433px;top:226px;width:1px;height:21px;background:#f8f8f8;"></div>
<div style="left:493px;top:226px;width:1px;height:21px;background:#f8f8f8;"></div>
<div style="left:584px;top:226px;width:1px;height:21px;background:#f8f8f8;"></div>
<div style="left:158px;top:226px;width:152px;height:21px;overflow:hidden;">
<span class="t" style="left:71.40px;top:5.69px;font-size:11px;line-height:11px;color:#000;transform:scaleX(0.9860);">Start Creation of Business Plan</span>
</div>
<span class="t" style="left:326.00px;top:231.69px;font-size:11px;line-height:11px;color:#000;transform:scaleX(0.9743);">94.0%</span>
<span class="t" style="left:384.43px;top:231.69px;font-size:11px;line-height:11px;color:#000;transform:scaleX(0.9850);">0 days</span>
<span class="t" style="left:447.33px;top:231.69px;font-size:11px;line-height:11px;color:#000;transform:scaleX(0.9850);">0 days</span>
<span class="t" style="left:499.50px;top:231.69px;font-size:11px;line-height:11px;color:#000;transform:scaleX(0.9686);">10/16/13 08:00</span>
<span class="t" style="left:590.00px;top:231.69px;font-size:11px;line-height:11px;color:#000;transform:scaleX(0.9754);">10/16/13 08:00</span>
<div class="rh" style="left:120px;top:248px;width:38px;height:22px;"></div>
<span class="t" style="left:135.20px;top:253.09px;font-size:11px;line-height:11px;color:#000;transform:scaleX(0.9800);">4</span>
<div style="left:316px;top:248px;width:52px;height:21px;background:#50fc8c;"></div>
<div style="left:368px;top:248px;width:66px;height:21px;background:#fff;"></div>
<div style="left:434px;top:248px;width:60px;height:21px;background:#f0f0f0;overflow:hidden;"></div>
<div style="left:494px;top:248px;width:91px;height:21px;background:#f0f0f0;"></div>
<div style="left:585px;top:248px;width:91px;height:21px;background:#f0f0f0;"></div>
<div style="left:158px;top:269px;width:158px;height:1px;background:#ececec;"></div>
<div style="left:316px;top:269px;width:360px;height:1px;background:#fafafa;"></div>
<div style="left:433px;top:248px;width:1px;height:21px;background:#f8f8f8;"></div>
<div style="left:493px;top:248px;width:1px;height:21px;background:#f8f8f8;"></div>
<div style="left:584px;top:248px;width:1px;height:21px;background:#f8f8f8;"></div>
<div style="left:158px;top:248px;width:152px;height:21px;overflow:hidden;">
<span class="t" style="left:71.40px;top:5.69px;font-size:11px;line-height:11px;color:#000;transform:scaleX(0.9860);">Meet to discuss responsibilities</span>
</div>
<span class="t" style="left:326.00px;top:253.69px;font-size:11px;line-height:11px;color:#000;transform:scaleX(0.9743);">94.0%</span>
<span class="t" style="left:384.43px;top:253.69px;font-size:11px;line-height:11px;color:#000;transform:scaleX(0.9850);">3 days</span>
<span class="t" style="left:447.33px;top:253.69px;font-size:11px;line-height:11px;color:#000;transform:scaleX(0.9850);">4 days</span>
<span class="t" style="left:499.50px;top:253.69px;font-size:11px;line-height:11px;color:#000;transform:scaleX(0.9686);">10/16/13 08:00</span>
<span class="t" style="left:590.00px;top:253.69px;font-size:11px;line-height:11px;color:#000;transform:scaleX(0.9754);">10/21/13 17:00</span>
<div class="rh" style="left:120px;top:270px;width:38px;height:22px;"></div>
<span class="t" style="left:135.20px;top:275.09px;font-size:11px;line-height:11px;color:#000;transform:scaleX(0.9800);">5</span>
<div style="left:316px;top:270px;width:52px;height:21px;background:#50fc8c;"></div>
<div style="left:368px;top:270px;width:66px;height:21px;background:#fff;"></div>
<div style="left:434px;top:270px;width:60px;height:21px;background:#f0f0f0;overflow:hidden;"></div>
<div style="left:494px;top:270px;width:91px;height:21px;background:#f0f0f0;"></div>
<div style="left:585px;top:270px;width:91px;height:21px;background:#f0f0f0;"></div>
<div style="left:158px;top:291px;width:158px;height:1px;background:#ececec;"></div>
<div style="left:316px;top:291px;width:360px;height:1px;background:#fafafa;"></div>
<div style="left:433px;top:270px;width:1px;height:21px;background:#f8f8f8;"></div>
<div style="left:493px;top:270px;width:1px;height:21px;background:#f8f8f8;"></div>
<div style="left:584px;top:270px;width:1px;height:21px;background:#f8f8f8;"></div>
<div style="left:158px;top:270px;width:152px;height:21px;overflow:hidden;">
<span class="t" style="left:71.40px;top:5.69px;font-size:11px;line-height:11px;color:#000;transform:scaleX(0.9860);">Divide Business Plan</span>
</div>
<span class="t" style="left:326.00px;top:275.69px;font-size:11px;line-height:11px;color:#000;transform:scaleX(0.9743);">94.0%</span>
<span class="t" style="left:387.14px;top:275.69px;font-size:11px;line-height:11px;color:#000;transform:scaleX(0.9850);">1 day</span>
<span class="t" style="left:450.04px;top:275.69px;font-size:11px;line-height:11px;color:#000;transform:scaleX(0.9850);">1 day</span>
<span class="t" style="left:499.50px;top:275.69px;font-size:11px;line-height:11px;color:#000;transform:scaleX(0.9686);">10/22/13 08:00</span>
<span class="t" style="left:590.00px;top:275.69px;font-size:11px;line-height:11px;color:#000;transform:scaleX(0.9754);">10/22/13 17:00</span>
<div class="rh" style="left:120px;top:292px;width:38px;height:22px;"></div>
<span class="t" style="left:135.20px;top:297.09px;font-size:11px;line-height:11px;color:#000;transform:scaleX(0.9800);">6</span>
<div style="left:316px;top:292px;width:52px;height:21px;background:#f0f0f0;"></div>
<div style="left:368px;top:292px;width:66px;height:21px;background:#f0f0f0;"></div>
<div style="left:434px;top:292px;width:60px;height:21px;background:#f0f0f0;overflow:hidden;"></div>
<div style="left:494px;top:292px;width:91px;height:21px;background:#f0f0f0;"></div>
<div style="left:585px;top:292px;width:91px;height:21px;background:#f0f0f0;"></div>
<div style="left:158px;top:313px;width:158px;height:1px;background:#ececec;"></div>
<div style="left:316px;top:313px;width:360px;height:1px;background:#fafafa;"></div>
<div style="left:367px;top:292px;width:1px;height:21px;background:#f8f8f8;"></div>
<div style="left:433px;top:292px;width:1px;height:21px;background:#f8f8f8;"></div>
<div style="left:493px;top:292px;width:1px;height:21px;background:#f8f8f8;"></div>
<div style="left:584px;top:292px;width:1px;height:21px;background:#f8f8f8;"></div>
<div style="left:158px;top:292px;width:152px;height:21px;overflow:hidden;">
<span class="t" style="left:55.40px;top:5.69px;font-size:11px;line-height:11px;color:#000;font-weight:bold;transform:scaleX(1.0430);">Market Analysis</span>
</div>
<span class="t" style="left:379.81px;top:297.69px;font-size:11px;line-height:11px;color:#000;font-weight:bold;transform:scaleX(1.0200);">40 days</span>
<div style="left:438.5px;top:292px;width:51px;height:21px;overflow:hidden;">
<span class="t" style="left:-3.00px;top:5.69px;font-size:11px;line-height:11px;color:#000;font-weight:bold;transform:scaleX(1.0152);">52.01 days</span>
</div>
<span class="t" style="left:499.50px;top:297.69px;font-size:11px;line-height:11px;color:#000;font-weight:bold;transform:scaleX(0.9606);">10/23/13 08:00</span>
<span class="t" style="left:590.00px;top:297.69px;font-size:11px;line-height:11px;color:#000;font-weight:bold;transform:scaleX(0.9674);">01/03/14 08:04</span>
<div class="rh" style="left:120px;top:314px;width:38px;height:22px;"></div>
<span class="t" style="left:135.20px;top:319.09px;font-size:11px;line-height:11px;color:#000;transform:scaleX(0.9800);">7</span>
<div style="left:316px;top:314px;width:52px;height:21px;background:#f0f0f0;"></div>
<div style="left:368px;top:314px;width:66px;height:21px;background:#f0f0f0;"></div>
<div style="left:434px;top:314px;width:60px;height:21px;background:#f0f0f0;overflow:hidden;"></div>
<div style="left:494px;top:314px;width:91px;height:21px;background:#f0f0f0;"></div>
<div style="left:585px;top:314px;width:91px;height:21px;background:#f0f0f0;"></div>
<div style="left:158px;top:335px;width:158px;height:1px;background:#ececec;"></div>
<div style="left:316px;top:335px;width:360px;height:1px;background:#fafafa;"></div>
<div style="left:367px;top:314px;width:1px;height:21px;background:#f8f8f8;"></div>
<div style="left:433px;top:314px;width:1px;height:21px;background:#f8f8f8;"></div>
<div style="left:493px;top:314px;width:1px;height:21px;background:#f8f8f8;"></div>
<div style="left:584px;top:314px;width:1px;height:21px;background:#f8f8f8;"></div>
<div style="left:158px;top:314px;width:152px;height:21px;overflow:hidden;">
<span class="t" style="left:71.40px;top:5.69px;font-size:11px;line-height:11px;color:#000;font-weight:bold;transform:scaleX(1.0430);">Who are the customers</span>
</div>
<span class="t" style="left:379.81px;top:319.69px;font-size:11px;line-height:11px;color:#000;font-weight:bold;transform:scaleX(1.0200);">30 days</span>
<span class="t" style="left:442.71px;top:319.69px;font-size:11px;line-height:11px;color:#000;font-weight:bold;transform:scaleX(1.0200);">31 days</span>
<span class="t" style="left:499.50px;top:319.69px;font-size:11px;line-height:11px;color:#000;font-weight:bold;transform:scaleX(0.9606);">10/23/13 08:00</span>
<span class="t" style="left:590.00px;top:319.69px;font-size:11px;line-height:11px;color:#000;font-weight:bold;transform:scaleX(0.9674);">12/04/13 17:00</span>
<div class="rh" style="left:120px;top:336px;width:38px;height:22px;"></div>
<span class="t" style="left:135.20px;top:341.09px;font-size:11px;line-height:11px;color:#000;transform:scaleX(0.9800);">8</span>
<div style="left:316px;top:336px;width:52px;height:21px;background:#50fc8c;"></div>
<div style="left:368px;top:336px;width:66px;height:21px;background:#fff;"></div>
<div style="left:434px;top:336px;width:60px;height:21px;background:#f0f0f0;overflow:hidden;"></div>
<div style="left:494px;top:336px;width:91px;height:21px;background:#f0f0f0;"></div>
<div style="left:585px;top:336px;width:91px;height:21px;background:#f0f0f0;"></div>
<div style="left:158px;top:357px;width:158px;height:1px;background:#ececec;"></div>
<div style="left:316px;top:357px;width:360px;height:1px;background:#fafafa;"></div>
<div style="left:433px;top:336px;width:1px;height:21px;background:#f8f8f8;"></div>
<div style="left:493px;top:336px;width:1px;height:21px;background:#f8f8f8;"></div>
<div style="left:584px;top:336px;width:1px;height:21px;background:#f8f8f8;"></div>
<div style="left:158px;top:336px;width:152px;height:21px;overflow:hidden;">
<span class="t" style="left:87.40px;top:5.69px;font-size:11px;line-height:11px;color:#000;transform:scaleX(0.9860);">Start Customer Analysis</span>
</div>
<span class="t" style="left:326.00px;top:341.69px;font-size:11px;line-height:11px;color:#000;transform:scaleX(0.9743);">94.0%</span>
<span class="t" style="left:384.43px;top:341.69px;font-size:11px;line-height:11px;color:#000;transform:scaleX(0.9850);">0 days</span>
<span class="t" style="left:447.33px;top:341.69px;font-size:11px;line-height:11px;color:#000;transform:scaleX(0.9850);">0 days</span>
<span class="t" style="left:499.50px;top:341.69px;font-size:11px;line-height:11px;color:#000;transform:scaleX(0.9686);">10/22/13 17:00</span>
<span class="t" style="left:590.00px;top:341.69px;font-size:11px;line-height:11px;color:#000;transform:scaleX(0.9754);">10/22/13 17:00</span>
<div class="rh" style="left:120px;top:358px;width:38px;height:22px;"></div>
<span class="t" style="left:135.20px;top:363.09px;font-size:11px;line-height:11px;color:#000;transform:scaleX(0.9800);">9</span>
<div style="left:316px;top:358px;width:52px;height:21px;background:#50fc8c;"></div>
<div style="left:368px;top:358px;width:66px;height:21px;background:#fff;"></div>
<div style="left:434px;top:358px;width:60px;height:21px;background:#f0f0f0;overflow:hidden;"></div>
<div style="left:494px;top:358px;width:91px;height:21px;background:#f0f0f0;"></div>
<div style="left:585px;top:358px;width:91px;height:21px;background:#f0f0f0;"></div>
<div style="left:158px;top:379px;width:158px;height:1px;background:#ececec;"></div>
<div style="left:316px;top:379px;width:360px;height:1px;background:#fafafa;"></div>
<div style="left:433px;top:358px;width:1px;height:21px;background:#f8f8f8;"></div>
<div style="left:493px;top:358px;width:1px;height:21px;background:#f8f8f8;"></div>
<div style="left:584px;top:358px;width:1px;height:21px;background:#f8f8f8;"></div>
<div style="left:158px;top:358px;width:152px;height:21px;overflow:hidden;">
<span class="t" style="left:87.40px;top:5.69px;font-size:11px;line-height:11px;color:#000;transform:scaleX(0.9860);">Develop a description</span>
</div>
<span class="t" style="left:326.00px;top:363.69px;font-size:11px;line-height:11px;color:#000;transform:scaleX(0.9743);">94.0%</span>
<span class="t" style="left:381.42px;top:363.69px;font-size:11px;line-height:11px;color:#000;transform:scaleX(0.9850);">10 days</span>
<span class="t" style="left:444.32px;top:363.69px;font-size:11px;line-height:11px;color:#000;transform:scaleX(0.9850);">10 days</span>
<span class="t" style="left:499.50px;top:363.69px;font-size:11px;line-height:11px;color:#000;transform:scaleX(0.9686);">10/23/13 08:00</span>
<span class="t" style="left:590.00px;top:363.69px;font-size:11px;line-height:11px;color:#000;transform:scaleX(0.9863);">11/05/13 17:00</span>
<div class="rh" style="left:120px;top:380px;width:38px;height:22px;"></div>
<span class="t" style="left:132.20px;top:385.09px;font-size:11px;line-height:11px;color:#000;transform:scaleX(0.9800);">10</span>
<div style="left:316px;top:380px;width:52px;height:21px;background:#50fc8c;"></div>
<div style="left:368px;top:380px;width:66px;height:21px;background:#fff;"></div>
<div style="left:434px;top:380px;width:60px;height:21px;background:#f0f0f0;overflow:hidden;"></div>
<div style="left:494px;top:380px;width:91px;height:21px;background:#f0f0f0;"></div>
<div style="left:585px;top:380px;width:91px;height:21px;background:#f0f0f0;"></div>
<div style="left:158px;top:401px;width:158px;height:1px;background:#ececec;"></div>
<div style="left:316px;top:401px;width:360px;height:1px;background:#fafafa;"></div>
<div style="left:433px;top:380px;width:1px;height:21px;background:#f8f8f8;"></div>
<div style="left:493px;top:380px;width:1px;height:21px;background:#f8f8f8;"></div>
<div style="left:584px;top:380px;width:1px;height:21px;background:#f8f8f8;"></div>
<div style="left:158px;top:380px;width:152px;height:21px;overflow:hidden;">
<span class="t" style="left:87.40px;top:5.69px;font-size:11px;line-height:11px;color:#000;transform:scaleX(0.9860);">What is the potential</span>
</div>
<span class="t" style="left:326.00px;top:385.69px;font-size:11px;line-height:11px;color:#000;transform:scaleX(0.9743);">94.0%</span>
<span class="t" style="left:381.42px;top:385.69px;font-size:11px;line-height:11px;color:#000;transform:scaleX(0.9850);">10 days</span>
<span class="t" style="left:444.72px;top:385.69px;font-size:11px;line-height:11px;color:#000;transform:scaleX(0.9850);">11 days</span>
<span class="t" style="left:499.50px;top:385.69px;font-size:11px;line-height:11px;color:#000;transform:scaleX(0.9794);">11/06/13 08:00</span>
<span class="t" style="left:590.00px;top:385.69px;font-size:11px;line-height:11px;color:#000;transform:scaleX(0.9863);">11/20/13 17:00</span>
<div class="rh" style="left:120px;top:402px;width:38px;height:22px;"></div>
<span class="t" style="left:132.60px;top:407.09px;font-size:11px;line-height:11px;color:#000;transform:scaleX(0.9800);">11</span>
<div style="left:316px;top:402px;width:52px;height:21px;background:#50fc8c;"></div>
<div style="left:368px;top:402px;width:66px;height:21px;background:#fff;"></div>
<div style="left:434px;top:402px;width:60px;height:21px;background:#f0f0f0;overflow:hidden;"></div>
<div style="left:494px;top:402px;width:91px;height:21px;background:#f0f0f0;"></div>
<div style="left:585px;top:402px;width:91px;height:21px;background:#f0f0f0;"></div>
<div style="left:158px;top:423px;width:158px;height:1px;background:#ececec;"></div>
<div style="left:316px;top:423px;width:360px;height:1px;background:#fafafa;"></div>
<div style="left:433px;top:402px;width:1px;height:21px;background:#f8f8f8;"></div>
<div style="left:493px;top:402px;width:1px;height:21px;background:#f8f8f8;"></div>
<div style="left:584px;top:402px;width:1px;height:21px;background:#f8f8f8;"></div>
<div style="left:158px;top:402px;width:152px;height:21px;overflow:hidden;">
<span class="t" style="left:87.40px;top:5.69px;font-size:11px;line-height:11px;color:#000;transform:scaleX(0.9860);">How can you reach</span>
</div>
<span class="t" style="left:326.00px;top:407.69px;font-size:11px;line-height:11px;color:#000;transform:scaleX(0.9743);">94.0%</span>
<span class="t" style="left:381.42px;top:407.69px;font-size:11px;line-height:11px;color:#000;transform:scaleX(0.9850);">10 days</span>
<span class="t" style="left:444.32px;top:407.69px;font-size:11px;line-height:11px;color:#000;transform:scaleX(0.9850);">10 days</span>
<span class="t" style="left:499.50px;top:407.69px;font-size:11px;line-height:11px;color:#000;transform:scaleX(0.9794);">11/21/13 08:00</span>
<span class="t" style="left:590.00px;top:407.69px;font-size:11px;line-height:11px;color:#000;transform:scaleX(0.9754);">12/04/13 17:00</span>
<div class="rh" style="left:120px;top:424px;width:38px;height:22px;"></div>
<span class="t" style="left:132.20px;top:429.09px;font-size:11px;line-height:11px;color:#000;transform:scaleX(0.9800);">12</span>
<div style="left:316px;top:424px;width:52px;height:21px;background:#50fc8c;"></div>
<div style="left:368px;top:424px;width:66px;height:21px;background:#fff;"></div>
<div style="left:434px;top:424px;width:60px;height:21px;background:#f0f0f0;overflow:hidden;"></div>
<div style="left:494px;top:424px;width:91px;height:21px;background:#f0f0f0;"></div>
<div style="left:585px;top:424px;width:91px;height:21px;background:#f0f0f0;"></div>
<div style="left:158px;top:445px;width:158px;height:1px;background:#ececec;"></div>
<div style="left:316px;top:445px;width:360px;height:1px;background:#fafafa;"></div>
<div style="left:433px;top:424px;width:1px;height:21px;background:#f8f8f8;"></div>
<div style="left:493px;top:424px;width:1px;height:21px;background:#f8f8f8;"></div>
<div style="left:584px;top:424px;width:1px;height:21px;background:#f8f8f8;"></div>
<div style="left:158px;top:424px;width:152px;height:21px;overflow:hidden;">
<span class="t" style="left:87.40px;top:5.69px;font-size:11px;line-height:11px;color:#000;transform:scaleX(0.9860);">Finish Customer Analysis</span>
</div>
<span class="t" style="left:326.00px;top:429.69px;font-size:11px;line-height:11px;color:#000;transform:scaleX(0.9743);">94.0%</span>
<span class="t" style="left:384.43px;top:429.69px;font-size:11px;line-height:11px;color:#000;transform:scaleX(0.9850);">0 days</span>
<span class="t" style="left:447.33px;top:429.69px;font-size:11px;line-height:11px;color:#000;transform:scaleX(0.9850);">0 days</span>
<span class="t" style="left:499.50px;top:429.69px;font-size:11px;line-height:11px;color:#000;transform:scaleX(0.9686);">12/04/13 17:00</span>
<span class="t" style="left:590.00px;top:429.69px;font-size:11px;line-height:11px;color:#000;transform:scaleX(0.9754);">12/04/13 17:00</span>
<div class="rh" style="left:120px;top:446px;width:38px;height:22px;"></div>
<span class="t" style="left:132.20px;top:451.09px;font-size:11px;line-height:11px;color:#000;transform:scaleX(0.9800);">13</span>
<div style="left:316px;top:446px;width:52px;height:21px;background:#f0f0f0;"></div>
<div style="left:368px;top:446px;width:66px;height:21px;background:#f0f0f0;"></div>
<div style="left:434px;top:446px;width:60px;height:21px;background:#f0f0f0;overflow:hidden;"></div>
<div style="left:494px;top:446px;width:91px;height:21px;background:#f0f0f0;"></div>
<div style="left:585px;top:446px;width:91px;height:21px;background:#f0f0f0;"></div>
<div style="left:158px;top:467px;width:158px;height:1px;background:#ececec;"></div>
<div style="left:316px;top:467px;width:360px;height:1px;background:#fafafa;"></div>
<div style="left:367px;top:446px;width:1px;height:21px;background:#f8f8f8;"></div>
<div style="left:433px;top:446px;width:1px;height:21px;background:#f8f8f8;"></div>
<div style="left:493px;top:446px;width:1px;height:21px;background:#f8f8f8;"></div>
<div style="left:584px;top:446px;width:1px;height:21px;background:#f8f8f8;"></div>
<div style="left:158px;top:446px;width:152px;height:21px;overflow:hidden;">
<span class="t" style="left:71.40px;top:5.69px;font-size:11px;line-height:11px;color:#000;font-weight:bold;transform:scaleX(1.0430);">Who will be your competitors</span>
</div>
<span class="t" style="left:379.81px;top:451.69px;font-size:11px;line-height:11px;color:#000;font-weight:bold;transform:scaleX(1.0200);">40 days</span>
<span class="t" style="left:442.71px;top:451.69px;font-size:11px;line-height:11px;color:#000;font-weight:bold;transform:scaleX(1.0200);">52 days</span>
<span class="t" style="left:499.50px;top:451.69px;font-size:11px;line-height:11px;color:#000;font-weight:bold;transform:scaleX(0.9606);">10/23/13 08:00</span>
<span class="t" style="left:590.00px;top:451.69px;font-size:11px;line-height:11px;color:#000;font-weight:bold;transform:scaleX(0.9674);">01/02/14 17:00</span>
<div class="rh" style="left:120px;top:468px;width:38px;height:22px;"></div>
<span class="t" style="left:132.20px;top:473.09px;font-size:11px;line-height:11px;color:#000;transform:scaleX(0.9800);">14</span>
<div style="left:316px;top:468px;width:52px;height:21px;background:#50fc8c;"></div>
<div style="left:368px;top:468px;width:66px;height:21px;background:#fff;"></div>
<div style="left:434px;top:468px;width:60px;height:21px;background:#f0f0f0;overflow:hidden;"></div>
<div style="left:494px;top:468px;width:91px;height:21px;background:#f0f0f0;"></div>
<div style="left:585px;top:468px;width:91px;height:21px;background:#f0f0f0;"></div>
<div style="left:158px;top:489px;width:158px;height:1px;background:#ececec;"></div>
<div style="left:316px;top:489px;width:360px;height:1px;background:#fafafa;"></div>
<div style="left:433px;top:468px;width:1px;height:21px;background:#f8f8f8;"></div>
<div style="left:493px;top:468px;width:1px;height:21px;background:#f8f8f8;"></div>
<div style="left:584px;top:468px;width:1px;height:21px;background:#f8f8f8;"></div>
<div style="left:158px;top:468px;width:152px;height:21px;overflow:hidden;">
<span class="t" style="left:87.40px;top:5.69px;font-size:11px;line-height:11px;color:#000;transform:scaleX(0.9860);">Start Competitive Analysis</span>
</div>
<span class="t" style="left:326.00px;top:473.69px;font-size:11px;line-height:11px;color:#000;transform:scaleX(0.9743);">94.0%</span>
<span class="t" style="left:384.43px;top:473.69px;font-size:11px;line-height:11px;color:#000;transform:scaleX(0.9850);">0 days</span>
<span class="t" style="left:447.33px;top:473.69px;font-size:11px;line-height:11px;color:#000;transform:scaleX(0.9850);">0 days</span>
<span class="t" style="left:499.50px;top:473.69px;font-size:11px;line-height:11px;color:#000;transform:scaleX(0.9686);">10/22/13 17:00</span>
<span class="t" style="left:590.00px;top:473.69px;font-size:11px;line-height:11px;color:#000;transform:scaleX(0.9754);">10/22/13 17:00</span>
<div class="rh" style="left:120px;top:490px;width:38px;height:22px;"></div>
<span class="t" style="left:132.20px;top:495.09px;font-size:11px;line-height:11px;color:#000;transform:scaleX(0.9800);">15</span>
<div style="left:316px;top:490px;width:52px;height:21px;background:#50fc8c;"></div>
<div style="left:368px;top:490px;width:66px;height:21px;background:#fff;"></div>
<div style="left:434px;top:490px;width:60px;height:21px;background:#f0f0f0;overflow:hidden;"></div>
<div style="left:494px;top:490px;width:91px;height:21px;background:#f0f0f0;"></div>
<div style="left:585px;top:490px;width:91px;height:21px;background:#f0f0f0;"></div>
<div style="left:158px;top:511px;width:158px;height:1px;background:#ececec;"></div>
<div style="left:316px;top:511px;width:360px;height:1px;background:#fafafa;"></div>
<div style="left:433px;top:490px;width:1px;height:21px;background:#f8f8f8;"></div>
<div style="left:493px;top:490px;width:1px;height:21px;background:#f8f8f8;"></div>
<div style="left:584px;top:490px;width:1px;height:21px;background:#f8f8f8;"></div>
<div style="left:158px;top:490px;width:152px;height:21px;overflow:hidden;">
<span class="t" style="left:87.40px;top:5.69px;font-size:11px;line-height:11px;color:#000;transform:scaleX(0.9860);">Who are your competitors</span>
</div>
<span class="t" style="left:326.00px;top:495.69px;font-size:11px;line-height:11px;color:#000;transform:scaleX(0.9743);">94.0%</span>
<span class="t" style="left:381.42px;top:495.69px;font-size:11px;line-height:11px;color:#000;transform:scaleX(0.9850);">10 days</span>
<span class="t" style="left:444.32px;top:495.69px;font-size:11px;line-height:11px;color:#000;transform:scaleX(0.9850);">13 days</span>
<span class="t" style="left:499.50px;top:495.69px;font-size:11px;line-height:11px;color:#000;transform:scaleX(0.9686);">10/23/13 08:00</span>
<span class="t" style="left:590.00px;top:495.69px;font-size:11px;line-height:11px;color:#000;transform:scaleX(0.9863);">11/08/13 17:00</span>
<div class="rh" style="left:120px;top:512px;width:38px;height:22px;"></div>
<span class="t" style="left:132.20px;top:517.09px;font-size:11px;line-height:11px;color:#000;transform:scaleX(0.9800);">16</span>
<div style="left:316px;top:512px;width:52px;height:21px;background:#50fc8c;"></div>
<div style="left:368px;top:512px;width:66px;height:21px;background:#fff;"></div>
<div style="left:434px;top:512px;width:60px;height:21px;background:#f0f0f0;overflow:hidden;"></div>
<div style="left:494px;top:512px;width:91px;height:21px;background:#f0f0f0;"></div>
<div style="left:585px;top:512px;width:91px;height:21px;background:#f0f0f0;"></div>
<div style="left:158px;top:533px;width:158px;height:1px;background:#ececec;"></div>
<div style="left:316px;top:533px;width:360px;height:1px;background:#fafafa;"></div>
<div style="left:433px;top:512px;width:1px;height:21px;background:#f8f8f8;"></div>
<div style="left:493px;top:512px;width:1px;height:21px;background:#f8f8f8;"></div>
<div style="left:584px;top:512px;width:1px;height:21px;background:#f8f8f8;"></div>
<div style="left:158px;top:512px;width:152px;height:21px;overflow:hidden;">
<span class="t" style="left:87.40px;top:5.69px;font-size:11px;line-height:11px;color:#000;transform:scaleX(0.9860);">How effective are they</span>
</div>
<span class="t" style="left:326.00px;top:517.69px;font-size:11px;line-height:11px;color:#000;transform:scaleX(0.9743);">94.0%</span>
<span class="t" style="left:381.42px;top:517.69px;font-size:11px;line-height:11px;color:#000;transform:scaleX(0.9850);">15 days</span>
<span class="t" style="left:444.32px;top:517.69px;font-size:11px;line-height:11px;color:#000;transform:scaleX(0.9850);">20 days</span>
<span class="t" style="left:499.50px;top:517.69px;font-size:11px;line-height:11px;color:#000;transform:scaleX(0.9905);">11/11/13 08:00</span>
<span class="t" style="left:590.00px;top:517.69px;font-size:11px;line-height:11px;color:#000;transform:scaleX(0.9754);">12/06/13 17:00</span>
<div class="rh" style="left:120px;top:534px;width:38px;height:22px;"></div>
<span class="t" style="left:132.20px;top:539.09px;font-size:11px;line-height:11px;color:#000;transform:scaleX(0.9800);">17</span>
<div style="left:316px;top:534px;width:52px;height:21px;background:#50fc8c;"></div>
<div style="left:368px;top:534px;width:66px;height:21px;background:#fff;"></div>
<div style="left:434px;top:534px;width:60px;height:21px;background:#f0f0f0;overflow:hidden;"></div>
<div style="left:494px;top:534px;width:91px;height:21px;background:#f0f0f0;"></div>
<div style="left:585px;top:534px;width:91px;height:21px;background:#f0f0f0;"></div>
<div style="left:158px;top:555px;width:158px;height:1px;background:#ececec;"></div>
<div style="left:316px;top:555px;width:360px;height:1px;background:#fafafa;"></div>
<div style="left:433px;top:534px;width:1px;height:21px;background:#f8f8f8;"></div>
<div style="left:493px;top:534px;width:1px;height:21px;background:#f8f8f8;"></div>
<div style="left:584px;top:534px;width:1px;height:21px;background:#f8f8f8;"></div>
<div style="left:158px;top:534px;width:152px;height:21px;overflow:hidden;">
<span class="t" style="left:87.40px;top:5.69px;font-size:11px;line-height:11px;color:#000;transform:scaleX(0.9860);">Will you be competitive</span>
</div>
<span class="t" style="left:326.00px;top:539.69px;font-size:11px;line-height:11px;color:#000;transform:scaleX(0.9743);">94.0%</span>
<span class="t" style="left:381.42px;top:539.69px;font-size:11px;line-height:11px;color:#000;transform:scaleX(0.9850);">15 days</span>
<span class="t" style="left:444.32px;top:539.69px;font-size:11px;line-height:11px;color:#000;transform:scaleX(0.9850);">19 days</span>
<span class="t" style="left:499.50px;top:539.69px;font-size:11px;line-height:11px;color:#000;transform:scaleX(0.9686);">12/09/13 08:00</span>
<span class="t" style="left:590.00px;top:539.69px;font-size:11px;line-height:11px;color:#000;transform:scaleX(0.9754);">01/02/14 17:00</span>
<div class="rh" style="left:120px;top:556px;width:38px;height:22px;"></div>
<span class="t" style="left:132.20px;top:561.09px;font-size:11px;line-height:11px;color:#000;transform:scaleX(0.9800);">18</span>
<div style="left:316px;top:556px;width:52px;height:21px;background:#50fc8c;"></div>
<div style="left:368px;top:556px;width:66px;height:21px;background:#fff;"></div>
<div style="left:434px;top:556px;width:60px;height:21px;background:#f0f0f0;overflow:hidden;"></div>
<div style="left:494px;top:556px;width:91px;height:21px;background:#f0f0f0;"></div>
<div style="left:585px;top:556px;width:91px;height:21px;background:#f0f0f0;"></div>
<div style="left:158px;top:577px;width:158px;height:1px;background:#ececec;"></div>
<div style="left:316px;top:577px;width:360px;height:1px;background:#fafafa;"></div>
<div style="left:433px;top:556px;width:1px;height:21px;background:#f8f8f8;"></div>
<div style="left:493px;top:556px;width:1px;height:21px;background:#f8f8f8;"></div>
<div style="left:584px;top:556px;width:1px;height:21px;background:#f8f8f8;"></div>
<div style="left:158px;top:556px;width:152px;height:21px;overflow:hidden;">
<span class="t" style="left:87.40px;top:5.69px;font-size:11px;line-height:11px;color:#000;transform:scaleX(0.9860);">Finish Competitive Analysis</span>
</div>
<span class="t" style="left:326.00px;top:561.69px;font-size:11px;line-height:11px;color:#000;transform:scaleX(0.9743);">94.0%</span>
<span class="t" style="left:384.43px;top:561.69px;font-size:11px;line-height:11px;color:#000;transform:scaleX(0.9850);">0 days</span>
<span class="t" style="left:447.33px;top:561.69px;font-size:11px;line-height:11px;color:#000;transform:scaleX(0.9850);">0 days</span>
<span class="t" style="left:499.50px;top:561.69px;font-size:11px;line-height:11px;color:#000;transform:scaleX(0.9686);">01/02/14 17:00</span>
<span class="t" style="left:590.00px;top:561.69px;font-size:11px;line-height:11px;color:#000;transform:scaleX(0.9754);">01/02/14 17:00</span>
<div class="rh" style="left:120px;top:578px;width:38px;height:22px;"></div>
<span class="t" style="left:132.20px;top:583.09px;font-size:11px;line-height:11px;color:#000;transform:scaleX(0.9800);">19</span>
<div style="left:316px;top:578px;width:52px;height:21px;background:#f0f0f0;"></div>
<div style="left:368px;top:578px;width:66px;height:21px;background:#f0f0f0;"></div>
<div style="left:434px;top:578px;width:60px;height:21px;background:#f0f0f0;overflow:hidden;"></div>
<div style="left:494px;top:578px;width:91px;height:21px;background:#f0f0f0;"></div>
<div style="left:585px;top:578px;width:91px;height:21px;background:#f0f0f0;"></div>
<div style="left:158px;top:599px;width:158px;height:1px;background:#ececec;"></div>
<div style="left:316px;top:599px;width:360px;height:1px;background:#fafafa;"></div>
<div style="left:367px;top:578px;width:1px;height:21px;background:#f8f8f8;"></div>
<div style="left:433px;top:578px;width:1px;height:21px;background:#f8f8f8;"></div>
<div style="left:493px;top:578px;width:1px;height:21px;background:#f8f8f8;"></div>
<div style="left:584px;top:578px;width:1px;height:21px;background:#f8f8f8;"></div>
<div style="left:158px;top:578px;width:152px;height:21px;overflow:hidden;">
<span class="t" style="left:71.40px;top:5.69px;font-size:11px;line-height:11px;color:#000;font-weight:bold;transform:scaleX(1.0430);">What will be Your product</span>
</div>
<span class="t" style="left:379.81px;top:583.69px;font-size:11px;line-height:11px;color:#000;font-weight:bold;transform:scaleX(1.0200);">35 days</span>
<span class="t" style="left:442.71px;top:583.69px;font-size:11px;line-height:11px;color:#000;font-weight:bold;transform:scaleX(1.0200);">38 days</span>
<span class="t" style="left:499.50px;top:583.69px;font-size:11px;line-height:11px;color:#000;font-weight:bold;transform:scaleX(0.9606);">10/23/13 08:00</span>
<span class="t" style="left:590.00px;top:583.69px;font-size:11px;line-height:11px;color:#000;font-weight:bold;transform:scaleX(0.9674);">12/13/13 17:00</span>
<div class="rh" style="left:120px;top:600px;width:38px;height:22px;"></div>
<span class="t" style="left:132.20px;top:605.09px;font-size:11px;line-height:11px;color:#000;transform:scaleX(0.9800);">20</span>
<div style="left:316px;top:600px;width:52px;height:21px;background:#50fc8c;"></div>
<div style="left:368px;top:600px;width:66px;height:21px;background:#fff;"></div>
<div style="left:434px;top:600px;width:60px;height:21px;background:#f0f0f0;overflow:hidden;"></div>
<div style="left:494px;top:600px;width:91px;height:21px;background:#f0f0f0;"></div>
<div style="left:585px;top:600px;width:91px;height:21px;background:#f0f0f0;"></div>
<div style="left:158px;top:621px;width:158px;height:1px;background:#ececec;"></div>
<div style="left:316px;top:621px;width:360px;height:1px;background:#fafafa;"></div>
<div style="left:433px;top:600px;width:1px;height:21px;background:#f8f8f8;"></div>
<div style="left:493px;top:600px;width:1px;height:21px;background:#f8f8f8;"></div>
<div style="left:584px;top:600px;width:1px;height:21px;background:#f8f8f8;"></div>
<div style="left:158px;top:600px;width:152px;height:21px;overflow:hidden;">
<span class="t" style="left:87.40px;top:5.69px;font-size:11px;line-height:11px;color:#000;transform:scaleX(0.9860);">Start Analysis</span>
</div>
<span class="t" style="left:326.00px;top:605.69px;font-size:11px;line-height:11px;color:#000;transform:scaleX(0.9743);">94.0%</span>
<span class="t" style="left:384.43px;top:605.69px;font-size:11px;line-height:11px;color:#000;transform:scaleX(0.9850);">0 days</span>
<span class="t" style="left:447.33px;top:605.69px;font-size:11px;line-height:11px;color:#000;transform:scaleX(0.9850);">0 days</span>
<span class="t" style="left:499.50px;top:605.69px;font-size:11px;line-height:11px;color:#000;transform:scaleX(0.9686);">10/22/13 17:00</span>
<span class="t" style="left:590.00px;top:605.69px;font-size:11px;line-height:11px;color:#000;transform:scaleX(0.9754);">10/22/13 17:00</span>
<div class="rh" style="left:120px;top:622px;width:38px;height:22px;"></div>
<span class="t" style="left:132.20px;top:627.09px;font-size:11px;line-height:11px;color:#000;transform:scaleX(0.9800);">21</span>
<div style="left:316px;top:622px;width:52px;height:21px;background:#50fc8c;"></div>
<div style="left:368px;top:622px;width:66px;height:21px;background:#fff;"></div>
<div style="left:434px;top:622px;width:60px;height:21px;background:#f0f0f0;overflow:hidden;"></div>
<div style="left:494px;top:622px;width:91px;height:21px;background:#f0f0f0;"></div>
<div style="left:585px;top:622px;width:91px;height:21px;background:#f0f0f0;"></div>
<div style="left:158px;top:643px;width:158px;height:1px;background:#ececec;"></div>
<div style="left:316px;top:643px;width:360px;height:1px;background:#fafafa;"></div>
<div style="left:433px;top:622px;width:1px;height:21px;background:#f8f8f8;"></div>
<div style="left:493px;top:622px;width:1px;height:21px;background:#f8f8f8;"></div>
<div style="left:584px;top:622px;width:1px;height:21px;background:#f8f8f8;"></div>
<div style="left:158px;top:622px;width:152px;height:21px;overflow:hidden;">
<span class="t" style="left:87.40px;top:5.69px;font-size:11px;line-height:11px;color:#000;transform:scaleX(0.9860);">What is the demand</span>
</div>
<span class="t" style="left:326.00px;top:627.69px;font-size:11px;line-height:11px;color:#000;transform:scaleX(0.9743);">94.0%</span>
<span class="t" style="left:384.43px;top:627.69px;font-size:11px;line-height:11px;color:#000;transform:scaleX(0.9850);">5 days</span>
<span class="t" style="left:447.33px;top:627.69px;font-size:11px;line-height:11px;color:#000;transform:scaleX(0.9850);">7 days</span>
<span class="t" style="left:499.50px;top:627.69px;font-size:11px;line-height:11px;color:#000;transform:scaleX(0.9686);">10/23/13 08:00</span>
<span class="t" style="left:590.00px;top:627.69px;font-size:11px;line-height:11px;color:#000;transform:scaleX(0.9754);">10/31/13 17:00</span>
<div class="rh" style="left:120px;top:644px;width:38px;height:22px;"></div>
<span class="t" style="left:132.20px;top:649.09px;font-size:11px;line-height:11px;color:#000;transform:scaleX(0.9800);">22</span>
<div style="left:316px;top:644px;width:52px;height:21px;background:#50fc8c;"></div>
<div style="left:368px;top:644px;width:66px;height:21px;background:#fff;"></div>
<div style="left:434px;top:644px;width:60px;height:21px;background:#f0f0f0;overflow:hidden;"></div>
<div style="left:494px;top:644px;width:91px;height:21px;background:#f0f0f0;"></div>
<div style="left:585px;top:644px;width:91px;height:21px;background:#f0f0f0;"></div>
<div style="left:158px;top:665px;width:158px;height:1px;background:#ececec;"></div>
<div style="left:316px;top:665px;width:360px;height:1px;background:#fafafa;"></div>
<div style="left:433px;top:644px;width:1px;height:21px;background:#f8f8f8;"></div>
<div style="left:493px;top:644px;width:1px;height:21px;background:#f8f8f8;"></div>
<div style="left:584px;top:644px;width:1px;height:21px;background:#f8f8f8;"></div>
<div style="left:158px;top:644px;width:152px;height:21px;overflow:hidden;">
<span class="t" style="left:87.40px;top:5.69px;font-size:11px;line-height:11px;color:#000;transform:scaleX(0.9860);">What is the demand</span>
</div>
<span class="t" style="left:326.00px;top:649.69px;font-size:11px;line-height:11px;color:#000;transform:scaleX(0.9743);">94.0%</span>
<span class="t" style="left:381.42px;top:649.69px;font-size:11px;line-height:11px;color:#000;transform:scaleX(0.9850);">10 days</span>
<span class="t" style="left:444.32px;top:649.69px;font-size:11px;line-height:11px;color:#000;transform:scaleX(0.9850);">10 days</span>
<span class="t" style="left:499.50px;top:649.69px;font-size:11px;line-height:11px;color:#000;transform:scaleX(0.9794);">11/01/13 08:00</span>
<span class="t" style="left:590.00px;top:649.69px;font-size:11px;line-height:11px;color:#000;transform:scaleX(0.9863);">11/14/13 17:00</span>
<div class="rh" style="left:120px;top:666px;width:38px;height:22px;"></div>
<span class="t" style="left:132.20px;top:671.09px;font-size:11px;line-height:11px;color:#000;transform:scaleX(0.9800);">23</span>
<div style="left:316px;top:666px;width:52px;height:21px;background:#50fc8c;"></div>
<div style="left:368px;top:666px;width:66px;height:21px;background:#fff;"></div>
<div style="left:434px;top:666px;width:60px;height:21px;background:#f0f0f0;overflow:hidden;"></div>
<div style="left:494px;top:666px;width:91px;height:21px;background:#f0f0f0;"></div>
<div style="left:585px;top:666px;width:91px;height:21px;background:#f0f0f0;"></div>
<div style="left:158px;top:687px;width:158px;height:1px;background:#ececec;"></div>
<div style="left:316px;top:687px;width:360px;height:1px;background:#fafafa;"></div>
<div style="left:433px;top:666px;width:1px;height:21px;background:#f8f8f8;"></div>
<div style="left:493px;top:666px;width:1px;height:21px;background:#f8f8f8;"></div>
<div style="left:584px;top:666px;width:1px;height:21px;background:#f8f8f8;"></div>
<div style="left:158px;top:666px;width:152px;height:21px;overflow:hidden;">
<span class="t" style="left:87.40px;top:5.69px;font-size:11px;line-height:11px;color:#000;transform:scaleX(0.9860);">How will you</span>
</div>
<span class="t" style="left:326.00px;top:671.69px;font-size:11px;line-height:11px;color:#000;transform:scaleX(0.9743);">94.0%</span>
<span class="t" style="left:381.42px;top:671.69px;font-size:11px;line-height:11px;color:#000;transform:scaleX(0.9850);">20 days</span>
<span class="t" style="left:444.32px;top:671.69px;font-size:11px;line-height:11px;color:#000;transform:scaleX(0.9850);">21 days</span>
<span class="t" style="left:499.50px;top:671.69px;font-size:11px;line-height:11px;color:#000;transform:scaleX(0.9794);">11/15/13 08:00</span>
<span class="t" style="left:590.00px;top:671.69px;font-size:11px;line-height:11px;color:#000;transform:scaleX(0.9754);">12/13/13 17:00</span>
<div class="rh" style="left:120px;top:688px;width:38px;height:22px;"></div>
<span class="t" style="left:132.20px;top:693.09px;font-size:11px;line-height:11px;color:#000;transform:scaleX(0.9800);">24</span>
<div style="left:316px;top:688px;width:52px;height:21px;background:#50fc8c;"></div>
<div style="left:368px;top:688px;width:66px;height:21px;background:#fff;"></div>
<div style="left:434px;top:688px;width:60px;height:21px;background:#f0f0f0;overflow:hidden;"></div>
<div style="left:494px;top:688px;width:91px;height:21px;background:#f0f0f0;"></div>
<div style="left:585px;top:688px;width:91px;height:21px;background:#f0f0f0;"></div>
<div style="left:158px;top:709px;width:158px;height:1px;background:#ececec;"></div>
<div style="left:316px;top:709px;width:360px;height:1px;background:#fafafa;"></div>
<div style="left:433px;top:688px;width:1px;height:21px;background:#f8f8f8;"></div>
<div style="left:493px;top:688px;width:1px;height:21px;background:#f8f8f8;"></div>
<div style="left:584px;top:688px;width:1px;height:21px;background:#f8f8f8;"></div>
<div style="left:158px;top:688px;width:152px;height:21px;overflow:hidden;">
<span class="t" style="left:87.40px;top:5.69px;font-size:11px;line-height:11px;color:#000;transform:scaleX(0.9860);">Finish Analysis</span>
</div>
<span class="t" style="left:326.00px;top:693.69px;font-size:11px;line-height:11px;color:#000;transform:scaleX(0.9743);">94.0%</span>
<span class="t" style="left:384.43px;top:693.69px;font-size:11px;line-height:11px;color:#000;transform:scaleX(0.9850);">0 days</span>
<span class="t" style="left:447.33px;top:693.69px;font-size:11px;line-height:11px;color:#000;transform:scaleX(0.9850);">0 days</span>
<span class="t" style="left:499.50px;top:693.69px;font-size:11px;line-height:11px;color:#000;transform:scaleX(0.9686);">12/13/13 17:00</span>
<span class="t" style="left:590.00px;top:693.69px;font-size:11px;line-height:11px;color:#000;transform:scaleX(0.9754);">12/13/13 17:00</span>
<div style="left:120px;top:710px;width:38px;height:4px;background:#f0f0f0;border-top:1px solid #fff;border-left:1px solid #fff;border-right:1px solid #a0a0a0;"></div>
<div style="left:316px;top:710px;width:52px;height:4px;background:#50fc8c;"></div>
<div style="left:434px;top:710px;width:60px;height:4px;background:#f0f0f0;"></div>
<div style="left:494px;top:710px;width:91px;height:4px;background:#f0f0f0;"></div>
<div style="left:585px;top:710px;width:91px;height:4px;background:#f0f0f0;"></div>
<svg style="left:158px;top:182px" width="160" height="532" viewBox="158 182 160 532" shape-rendering="crispEdges"><defs><linearGradient id="gtb" x1="0" y1="0" x2="1" y2="0"><stop offset="0" stop-color="#3c70f2"/><stop offset=".45" stop-color="#9cbcff"/><stop offset="1" stop-color="#4074f2"/></linearGradient></defs><rect x="163.5" y="189.5" width="8" height="8" fill="#fff" stroke="#9a9a9a"/><rect x="165" y="193" width="5" height="1" fill="#000"/><rect x="176.5" y="187.5" width="13" height="11" fill="#c0c0c0" stroke="#808080"/><path d="M178 190 h10 v4.300 h-1 q-.3 -1.800 -2 -1.800 h-4 q-1.700 0 -2 1.800 h-1 z" fill="#000" shape-rendering="geometricPrecision"/><rect x="179.5" y="211.5" width="8" height="8" fill="#fff" stroke="#9a9a9a"/><rect x="181" y="215" width="5" height="1" fill="#000"/><rect x="192.5" y="209.5" width="13" height="11" fill="#c0c0c0" stroke="#808080"/><path d="M194 212 h10 v4.300 h-1 q-.3 -1.800 -2 -1.800 h-4 q-1.700 0 -2 1.800 h-1 z" fill="#000" shape-rendering="geometricPrecision"/><rect x="208.5" y="231.5" width="13" height="11" fill="#c8c8c8" stroke="#808080"/><rect x="210" y="234" width="10" height="4" fill="#3f70f2"/><rect x="211" y="235" width="8" height="2" fill="#86a8fa"/><rect x="208.5" y="253.5" width="13" height="11" fill="#c8c8c8" stroke="#808080"/><rect x="210" y="256" width="10" height="4" fill="#3f70f2"/><rect x="211" y="257" width="8" height="2" fill="#86a8fa"/><rect x="215.5" y="261.5" width="6" height="3" fill="#fff080" stroke="#383838"/><rect x="208.5" y="275.5" width="13" height="11" fill="#c8c8c8" stroke="#808080"/><rect x="210" y="278" width="10" height="4" fill="#3f70f2"/><rect x="211" y="279" width="8" height="2" fill="#86a8fa"/><rect x="179.5" y="299.5" width="8" height="8" fill="#fff" stroke="#9a9a9a"/><rect x="181" y="303" width="5" height="1" fill="#000"/><rect x="192.5" y="297.5" width="13" height="11" fill="#c0c0c0" stroke="#808080"/><path d="M194 300 h10 v4.300 h-1 q-.3 -1.800 -2 -1.800 h-4 q-1.700 0 -2 1.800 h-1 z" fill="#000" shape-rendering="geometricPrecision"/><rect x="195.5" y="321.5" width="8" height="8" fill="#fff" stroke="#9a9a9a"/><rect x="197" y="325" width="5" height="1" fill="#000"/><rect x="208.5" y="319.5" width="13" height="11" fill="#c0c0c0" stroke="#808080"/><path d="M210 322 h10 v4.300 h-1 q-.3 -1.800 -2 -1.800 h-4 q-1.700 0 -2 1.800 h-1 z" fill="#000" shape-rendering="geometricPrecision"/><rect x="224.5" y="341.5" width="13" height="11" fill="#c8c8c8" stroke="#808080"/><rect x="226" y="344" width="10" height="4" fill="#3f70f2"/><rect x="227" y="345" width="8" height="2" fill="#86a8fa"/><rect x="224.5" y="363.5" width="13" height="11" fill="#c8c8c8" stroke="#808080"/><rect x="226" y="366" width="10" height="4" fill="#3f70f2"/><rect x="227" y="367" width="8" height="2" fill="#86a8fa"/><rect x="224.5" y="385.5" width="13" height="11" fill="#c8c8c8" stroke="#808080"/><rect x="226" y="388" width="10" height="4" fill="#3f70f2"/><rect x="227" y="389" width="8" height="2" fill="#86a8fa"/><rect x="224.5" y="407.5" width="13" height="11" fill="#c8c8c8" stroke="#808080"/><rect x="226" y="410" width="10" height="4" fill="#3f70f2"/><rect x="227" y="411" width="8" height="2" fill="#86a8fa"/><rect x="224.5" y="429.5" width="13" height="11" fill="#c8c8c8" stroke="#808080"/><rect x="226" y="432" width="10" height="4" fill="#3f70f2"/><rect x="227" y="433" width="8" height="2" fill="#86a8fa"/><rect x="195.5" y="453.5" width="8" height="8" fill="#fff" stroke="#9a9a9a"/><rect x="197" y="457" width="5" height="1" fill="#000"/><rect x="208.5" y="451.5" width="13" height="11" fill="#c0c0c0" stroke="#808080"/><path d="M210 454 h10 v4.300 h-1 q-.3 -1.800 -2 -1.800 h-4 q-1.700 0 -2 1.800 h-1 z" fill="#000" shape-rendering="geometricPrecision"/><rect x="224.5" y="473.5" width="13" height="11" fill="#c8c8c8" stroke="#808080"/><rect x="226" y="476" width="10" height="4" fill="#3f70f2"/><rect x="227" y="477" width="8" height="2" fill="#86a8fa"/><rect x="224.5" y="495.5" width="13" height="11" fill="#c8c8c8" stroke="#808080"/><rect x="226" y="498" width="10" height="4" fill="#3f70f2"/><rect x="227" y="499" width="8" height="2" fill="#86a8fa"/><rect x="224.5" y="517.5" width="13" height="11" fill="#c8c8c8" stroke="#808080"/><rect x="226" y="520" width="10" height="4" fill="#3f70f2"/><rect x="227" y="521" width="8" height="2" fill="#86a8fa"/><rect x="224.5" y="539.5" width="13" height="11" fill="#c8c8c8" stroke="#808080"/><rect x="226" y="542" width="10" height="4" fill="#3f70f2"/><rect x="227" y="543" width="8" height="2" fill="#86a8fa"/><rect x="224.5" y="561.5" width="13" height="11" fill="#c8c8c8" stroke="#808080"/><rect x="226" y="564" width="10" height="4" fill="#3f70f2"/><rect x="227" y="565" width="8" height="2" fill="#86a8fa"/><rect x="195.5" y="585.5" width="8" height="8" fill="#fff" stroke="#9a9a9a"/><rect x="197" y="589" width="5" height="1" fill="#000"/><rect x="208.5" y="583.5" width="13" height="11" fill="#c0c0c0" stroke="#808080"/><path d="M210 586 h10 v4.300 h-1 q-.3 -1.800 -2 -1.800 h-4 q-1.700 0 -2 1.800 h-1 z" fill="#000" shape-rendering="geometricPrecision"/><rect x="224.5" y="605.5" width="13" height="11" fill="#c8c8c8" stroke="#808080"/><rect x="226" y="608" width="10" height="4" fill="#3f70f2"/><rect x="227" y="609" width="8" height="2" fill="#86a8fa"/><rect x="224.5" y="627.5" width="13" height="11" fill="#c8c8c8" stroke="#808080"/><rect x="226" y="630" width="10" height="4" fill="#3f70f2"/><rect x="227" y="631" width="8" height="2" fill="#86a8fa"/><rect x="224.5" y="649.5" width="13" height="11" fill="#c8c8c8" stroke="#808080"/><rect x="226" y="652" width="10" height="4" fill="#3f70f2"/><rect x="227" y="653" width="8" height="2" fill="#86a8fa"/><rect x="224.5" y="671.5" width="13" height="11" fill="#c8c8c8" stroke="#808080"/><rect x="226" y="674" width="10" height="4" fill="#3f70f2"/><rect x="227" y="675" width="8" height="2" fill="#86a8fa"/><rect x="224.5" y="693.5" width="13" height="11" fill="#c8c8c8" stroke="#808080"/><rect x="226" y="696" width="10" height="4" fill="#3f70f2"/><rect x="227" y="697" width="8" height="2" fill="#86a8fa"/></svg>
<div class="chk" style="left:120px;top:714px;width:572px;height:16px;"></div>
<div class="sbtn" style="left:120px;top:714px;width:16px;height:16px;"></div>
<div class="sbtn" style="left:136px;top:714px;width:18px;height:16px;"></div>
<div class="sbtn" style="left:675px;top:714px;width:17px;height:16px;"></div>
<svg style="left:120px;top:714px" width="572" height="16" viewBox="0 0 572 16"><path d="M10 3.500 v8 l-4 -4 z" fill="#000"/><path d="M561 3.500 v8 l4 -4 z" fill="#000"/></svg>
<div style="left:692px;top:148px;width:6px;height:583px;background:#f0f0f0;border-left:1px solid #fff;"></div>
<div style="left:697px;top:148px;width:876px;height:1px;background:#a0a0a0;"></div>
<div style="left:698px;top:149px;width:875px;height:1px;background:#696969;"></div>
<div style="left:697px;top:148px;width:1px;height:582px;background:#a0a0a0;"></div>
<div style="left:698px;top:149px;width:1px;height:581px;background:#696969;"></div>
<div style="left:699px;top:150px;width:857px;height:32px;background:#f0f0f0;"></div>
<div style="left:699px;top:182px;width:857px;height:532px;background:#fff;"></div>
<div style="left:699px;top:182px;width:35px;height:532px;background:#fffdf5;"></div>
<div style="left:1485px;top:182px;width:71px;height:532px;background:#fffdf5;"></div>
<div style="left:734px;top:182px;width:1px;height:532px;background:#a0a0a0;"></div>
<div style="left:1484px;top:182px;width:1px;height:532px;background:#a0a0a0;"></div>
<div style="left:699px;top:150px;width:857px;height:1px;background:#fff;"></div>
<div style="left:699px;top:165px;width:857px;height:1px;background:#a0a0a0;"></div>
<div style="left:699px;top:166px;width:857px;height:1px;background:#fff;"></div>
<div style="left:699px;top:181px;width:857px;height:1px;background:#404040;"></div>
<div style="left:814px;top:151px;width:1px;height:14px;background:#a0a0a0;"></div>
<div style="left:815px;top:151px;width:1px;height:14px;background:#fff;"></div>
<div style="left:964px;top:151px;width:1px;height:14px;background:#a0a0a0;"></div>
<div style="left:965px;top:151px;width:1px;height:14px;background:#fff;"></div>
<div style="left:1119px;top:151px;width:1px;height:14px;background:#a0a0a0;"></div>
<div style="left:1120px;top:151px;width:1px;height:14px;background:#fff;"></div>
<div style="left:1274px;top:151px;width:1px;height:14px;background:#a0a0a0;"></div>
<div style="left:1275px;top:151px;width:1px;height:14px;background:#fff;"></div>
<div style="left:1414px;top:151px;width:1px;height:14px;background:#a0a0a0;"></div>
<div style="left:1415px;top:151px;width:1px;height:14px;background:#fff;"></div>
<span class="t" style="left:817.40px;top:152.69px;font-size:11px;line-height:11px;color:#000;transform:scaleX(0.9614);">November, 2013</span>
<span class="t" style="left:967.40px;top:152.69px;font-size:11px;line-height:11px;color:#000;transform:scaleX(0.9614);">December, 2013</span>
<span class="t" style="left:1122.40px;top:152.69px;font-size:11px;line-height:11px;color:#000;transform:scaleX(0.9810);">January, 2014</span>
<span class="t" style="left:1277.20px;top:152.69px;font-size:11px;line-height:11px;color:#000;transform:scaleX(0.9838);">February, 2014</span>
<span class="t" style="left:1417.40px;top:152.69px;font-size:11px;line-height:11px;color:#000;transform:scaleX(0.9680);">March, 2014</span>
<div style="left:699px;top:151px;width:100px;height:14px;overflow:hidden;">
<span class="t" style="left:-33.50px;top:1.69px;font-size:11px;line-height:11px;color:#000;transform:scaleX(0.9275);">October, 2013</span>
</div>
<div style="left:719px;top:167px;width:1px;height:14px;background:#a0a0a0;"></div>
<div style="left:720px;top:167px;width:1px;height:14px;background:#fff;"></div>
<span class="t" style="left:721.80px;top:168.69px;font-size:11px;line-height:11px;color:#000;transform:scaleX(0.9469);">13</span>
<div style="left:754px;top:167px;width:1px;height:14px;background:#a0a0a0;"></div>
<div style="left:755px;top:167px;width:1px;height:14px;background:#fff;"></div>
<span class="t" style="left:756.80px;top:168.69px;font-size:11px;line-height:11px;color:#000;transform:scaleX(0.9469);">20</span>
<div style="left:789px;top:167px;width:1px;height:14px;background:#a0a0a0;"></div>
<div style="left:790px;top:167px;width:1px;height:14px;background:#fff;"></div>
<span class="t" style="left:791.80px;top:168.69px;font-size:11px;line-height:11px;color:#000;transform:scaleX(0.9469);">27</span>
<div style="left:824px;top:167px;width:1px;height:14px;background:#a0a0a0;"></div>
<div style="left:825px;top:167px;width:1px;height:14px;background:#fff;"></div>
<span class="t" style="left:826.80px;top:168.69px;font-size:11px;line-height:11px;color:#000;transform:scaleX(0.9469);">03</span>
<div style="left:859px;top:167px;width:1px;height:14px;background:#a0a0a0;"></div>
<div style="left:860px;top:167px;width:1px;height:14px;background:#fff;"></div>
<span class="t" style="left:861.80px;top:168.69px;font-size:11px;line-height:11px;color:#000;transform:scaleX(0.9469);">10</span>
<div style="left:894px;top:167px;width:1px;height:14px;background:#a0a0a0;"></div>
<div style="left:895px;top:167px;width:1px;height:14px;background:#fff;"></div>
<span class="t" style="left:896.80px;top:168.69px;font-size:11px;line-height:11px;color:#000;transform:scaleX(0.9469);">17</span>
<div style="left:929px;top:167px;width:1px;height:14px;background:#a0a0a0;"></div>
<div style="left:930px;top:167px;width:1px;height:14px;background:#fff;"></div>
<span class="t" style="left:931.80px;top:168.69px;font-size:11px;line-height:11px;color:#000;transform:scaleX(0.9469);">24</span>
<div style="left:964px;top:167px;width:1px;height:14px;background:#a0a0a0;"></div>
<div style="left:965px;top:167px;width:1px;height:14px;background:#fff;"></div>
<span class="t" style="left:966.80px;top:168.69px;font-size:11px;line-height:11px;color:#000;transform:scaleX(0.9469);">01</span>
<div style="left:999px;top:167px;width:1px;height:14px;background:#a0a0a0;"></div>
<div style="left:1000px;top:167px;width:1px;height:14px;background:#fff;"></div>
<span class="t" style="left:1001.80px;top:168.69px;font-size:11px;line-height:11px;color:#000;transform:scaleX(0.9469);">08</span>
<div style="left:1034px;top:167px;width:1px;height:14px;background:#a0a0a0;"></div>
<div style="left:1035px;top:167px;width:1px;height:14px;background:#fff;"></div>
<span class="t" style="left:1036.80px;top:168.69px;font-size:11px;line-height:11px;color:#000;transform:scaleX(0.9469);">15</span>
<div style="left:1069px;top:167px;width:1px;height:14px;background:#a0a0a0;"></div>
<div style="left:1070px;top:167px;width:1px;height:14px;background:#fff;"></div>
<span class="t" style="left:1071.80px;top:168.69px;font-size:11px;line-height:11px;color:#000;transform:scaleX(0.9469);">22</span>
<div style="left:1104px;top:167px;width:1px;height:14px;background:#a0a0a0;"></div>
<div style="left:1105px;top:167px;width:1px;height:14px;background:#fff;"></div>
<span class="t" style="left:1106.80px;top:168.69px;font-size:11px;line-height:11px;color:#000;transform:scaleX(0.9469);">29</span>
<div style="left:1139px;top:167px;width:1px;height:14px;background:#a0a0a0;"></div>
<div style="left:1140px;top:167px;width:1px;height:14px;background:#fff;"></div>
<span class="t" style="left:1141.80px;top:168.69px;font-size:11px;line-height:11px;color:#000;transform:scaleX(0.9469);">05</span>
<div style="left:1174px;top:167px;width:1px;height:14px;background:#a0a0a0;"></div>
<div style="left:1175px;top:167px;width:1px;height:14px;background:#fff;"></div>
<span class="t" style="left:1176.80px;top:168.69px;font-size:11px;line-height:11px;color:#000;transform:scaleX(0.9469);">12</span>
<div style="left:1209px;top:167px;width:1px;height:14px;background:#a0a0a0;"></div>
<div style="left:1210px;top:167px;width:1px;height:14px;background:#fff;"></div>
<span class="t" style="left:1211.80px;top:168.69px;font-size:11px;line-height:11px;color:#000;transform:scaleX(0.9469);">19</span>
<div style="left:1244px;top:167px;width:1px;height:14px;background:#a0a0a0;"></div>
<div style="left:1245px;top:167px;width:1px;height:14px;background:#fff;"></div>
<span class="t" style="left:1246.80px;top:168.69px;font-size:11px;line-height:11px;color:#000;transform:scaleX(0.9469);">26</span>
<div style="left:1279px;top:167px;width:1px;height:14px;background:#a0a0a0;"></div>
<div style="left:1280px;top:167px;width:1px;height:14px;background:#fff;"></div>
<span class="t" style="left:1281.80px;top:168.69px;font-size:11px;line-height:11px;color:#000;transform:scaleX(0.9469);">02</span>
<div style="left:1314px;top:167px;width:1px;height:14px;background:#a0a0a0;"></div>
<div style="left:1315px;top:167px;width:1px;height:14px;background:#fff;"></div>
<span class="t" style="left:1316.80px;top:168.69px;font-size:11px;line-height:11px;color:#000;transform:scaleX(0.9469);">09</span>
<div style="left:1349px;top:167px;width:1px;height:14px;background:#a0a0a0;"></div>
<div style="left:1350px;top:167px;width:1px;height:14px;background:#fff;"></div>
<span class="t" style="left:1351.80px;top:168.69px;font-size:11px;line-height:11px;color:#000;transform:scaleX(0.9469);">16</span>
<div style="left:1384px;top:167px;width:1px;height:14px;background:#a0a0a0;"></div>
<div style="left:1385px;top:167px;width:1px;height:14px;background:#fff;"></div>
<span class="t" style="left:1386.80px;top:168.69px;font-size:11px;line-height:11px;color:#000;transform:scaleX(0.9469);">23</span>
<div style="left:1419px;top:167px;width:1px;height:14px;background:#a0a0a0;"></div>
<div style="left:1420px;top:167px;width:1px;height:14px;background:#fff;"></div>
<span class="t" style="left:1421.80px;top:168.69px;font-size:11px;line-height:11px;color:#000;transform:scaleX(0.9469);">02</span>
<div style="left:1454px;top:167px;width:1px;height:14px;background:#a0a0a0;"></div>
<div style="left:1455px;top:167px;width:1px;height:14px;background:#fff;"></div>
<span class="t" style="left:1456.80px;top:168.69px;font-size:11px;line-height:11px;color:#000;transform:scaleX(0.9469);">09</span>
<div style="left:1489px;top:167px;width:1px;height:14px;background:#a0a0a0;"></div>
<div style="left:1490px;top:167px;width:1px;height:14px;background:#fff;"></div>
<span class="t" style="left:1491.80px;top:168.69px;font-size:11px;line-height:11px;color:#000;transform:scaleX(0.9469);">16</span>
<div style="left:1524px;top:167px;width:1px;height:14px;background:#a0a0a0;"></div>
<div style="left:1525px;top:167px;width:1px;height:14px;background:#fff;"></div>
<span class="t" style="left:1526.80px;top:168.69px;font-size:11px;line-height:11px;color:#000;transform:scaleX(0.9469);">23</span>
<svg style="left:0;top:0" width="1575" height="752" viewBox="0 0 1575 752" shape-rendering="crispEdges"><defs><linearGradient id="gbar" x1="0" y1="0" x2="0" y2="1"><stop offset="0" stop-color="#9cc2e6"/><stop offset=".18" stop-color="#6aa2d4"/><stop offset=".55" stop-color="#5a94c8"/><stop offset=".85" stop-color="#4f88be"/><stop offset="1" stop-color="#2c5f96"/></linearGradient><clipPath id="gclip"><rect x="699" y="182" width="857" height="532"/></clipPath></defs><g clip-path="url(#gclip)"><path d="M727.0 186 H1492.0 V193 L1484.5 200.5 L1477.0 193 H742.0 L734.5 200.5 L727.0 193 Z" fill="#000" shape-rendering="geometricPrecision"/><path d="M727.0 208 H777.0 V215 L769.5 222.5 L762.0 215 H742.0 L734.5 222.5 L727.0 215 Z" fill="#000" shape-rendering="geometricPrecision"/><path d="M762.0 296 H1137.0 V303 L1129.5 310.5 L1122.0 303 H777.0 L769.5 310.5 L762.0 303 Z" fill="#000" shape-rendering="geometricPrecision"/><path d="M762.0 318 H992.0 V325 L984.5 332.5 L977.0 325 H777.0 L769.5 332.5 L762.0 325 Z" fill="#000" shape-rendering="geometricPrecision"/><path d="M762.0 450 H1137.0 V457 L1129.5 464.5 L1122.0 457 H777.0 L769.5 464.5 L762.0 457 Z" fill="#000" shape-rendering="geometricPrecision"/><path d="M762.0 582 H1037.0 V589 L1029.5 596.5 L1022.0 589 H777.0 L769.5 596.5 L762.0 589 Z" fill="#000" shape-rendering="geometricPrecision"/><rect x="734.5" y="249.5" width="14" height="8" fill="#fff" stroke="#3a7cb8"/><rect x="759.5" y="271.5" width="4" height="8" fill="#fff" stroke="#3a7cb8"/><rect x="764.5" y="359.5" width="69" height="8" fill="#fff" stroke="#3a7cb8"/><rect x="834.5" y="381.5" width="69" height="8" fill="#fff" stroke="#3a7cb8"/><rect x="904.5" y="403.5" width="69" height="8" fill="#fff" stroke="#3a7cb8"/><rect x="764.5" y="491.5" width="69" height="8" fill="#fff" stroke="#3a7cb8"/><rect x="834.5" y="513.5" width="104" height="8" fill="#fff" stroke="#3a7cb8"/><rect x="939.5" y="535.5" width="104" height="8" fill="#fff" stroke="#3a7cb8"/><rect x="764.5" y="623.5" width="34" height="8" fill="#fff" stroke="#3a7cb8"/><rect x="799.5" y="645.5" width="69" height="8" fill="#fff" stroke="#3a7cb8"/><rect x="869.5" y="667.5" width="139" height="8" fill="#fff" stroke="#3a7cb8"/><path d="M730.9 230.5 L734.5 226.9 L738.1 230.5 L734.5 234.1 Z" fill="#000" shape-rendering="geometricPrecision"/><path d="M728.9 242.5 L734.5 236.9 L740.1 242.5 L734.5 248.1 Z" fill="#000" shape-rendering="geometricPrecision"/><path d="M760.9 340.5 L764.5 336.9 L768.1 340.5 L764.5 344.1 Z" fill="#000" shape-rendering="geometricPrecision"/><path d="M763.9 352.5 L769.5 346.9 L775.1 352.5 L769.5 358.1 Z" fill="#000" shape-rendering="geometricPrecision"/><path d="M970.9 428.5 L974.5 424.9 L978.1 428.5 L974.5 432.1 Z" fill="#000" shape-rendering="geometricPrecision"/><path d="M978.9 440.5 L984.5 434.9 L990.1 440.5 L984.5 446.1 Z" fill="#000" shape-rendering="geometricPrecision"/><path d="M760.9 472.5 L764.5 468.9 L768.1 472.5 L764.5 476.1 Z" fill="#000" shape-rendering="geometricPrecision"/><path d="M763.9 484.5 L769.5 478.9 L775.1 484.5 L769.5 490.1 Z" fill="#000" shape-rendering="geometricPrecision"/><path d="M1040.9 560.5 L1044.5 556.9 L1048.1 560.5 L1044.5 564.1 Z" fill="#000" shape-rendering="geometricPrecision"/><path d="M1123.9 572.5 L1129.5 566.9 L1135.1 572.5 L1129.5 578.1 Z" fill="#000" shape-rendering="geometricPrecision"/><path d="M760.9 604.5 L764.5 600.9 L768.1 604.5 L764.5 608.1 Z" fill="#000" shape-rendering="geometricPrecision"/><path d="M763.9 616.5 L769.5 610.9 L775.1 616.5 L769.5 622.1 Z" fill="#000" shape-rendering="geometricPrecision"/><path d="M1005.9 692.5 L1009.5 688.9 L1013.1 692.5 L1009.5 696.1 Z" fill="#000" shape-rendering="geometricPrecision"/><path d="M1023.9 704.5 L1029.5 698.9 L1035.1 704.5 L1029.5 710.1 Z" fill="#000" shape-rendering="geometricPrecision"/><path d="M1040.9 714.5 L1044.5 710.9 L1048.1 714.5 L1044.5 718.1 Z" fill="#000" shape-rendering="geometricPrecision"/><path d="M1123.9 726.5 L1129.5 720.9 L1135.1 726.5 L1129.5 732.1 Z" fill="#000" shape-rendering="geometricPrecision"/><path d="M769 215.5 H776.5 V294" fill="none" stroke="#0000ff" stroke-width="1"/><path d="M773.0 292 H780.0 L776.5 296.5 Z" fill="#0000ff" shape-rendering="geometricPrecision"/><path d="M734.5 242.5 H739.5 V257" fill="none" stroke="#0000ff" stroke-width="1"/><path d="M736.0 255 H743.0 L739.5 259.5 Z" fill="#0000ff" shape-rendering="geometricPrecision"/><path d="M764 264.5 H769.5 V279" fill="none" stroke="#0000ff" stroke-width="1"/><path d="M766.0 277 H773.0 L769.5 281.5 Z" fill="#0000ff" shape-rendering="geometricPrecision"/><path d="M769 325.500 H755.500 V589.500 H760 M755.500 457.500 H769" fill="none" stroke="#0000ff"/><path d="M758 453.500 L762.500 457.500 L758 461.500 Z M758 585.500 L762.500 589.500 L758 593.500 Z" fill="#0000ff" shape-rendering="geometricPrecision"/><path d="M769.5 352.5 H774.5 V367" fill="none" stroke="#0000ff" stroke-width="1"/><path d="M771.0 365 H778.0 L774.5 369.5 Z" fill="#0000ff" shape-rendering="geometricPrecision"/><path d="M839 374.5 H844.5 V389" fill="none" stroke="#0000ff" stroke-width="1"/><path d="M841.0 387 H848.0 L844.5 391.5 Z" fill="#0000ff" shape-rendering="geometricPrecision"/><path d="M914 396.5 H919.5 V411" fill="none" stroke="#0000ff" stroke-width="1"/><path d="M916.0 409 H923.0 L919.5 413.5 Z" fill="#0000ff" shape-rendering="geometricPrecision"/><path d="M984 418.5 H989.5 V433" fill="none" stroke="#0000ff" stroke-width="1"/><path d="M986.0 431 H993.0 L989.5 435.5 Z" fill="#0000ff" shape-rendering="geometricPrecision"/><path d="M984.500 440.500 H1129.500 V714" fill="none" stroke="#0000ff"/><path d="M769.5 484.5 H774.5 V499" fill="none" stroke="#0000ff" stroke-width="1"/><path d="M771.0 497 H778.0 L774.5 501.5 Z" fill="#0000ff" shape-rendering="geometricPrecision"/><path d="M854 506.5 H864.5 V521" fill="none" stroke="#0000ff" stroke-width="1"/><path d="M861.0 519 H868.0 L864.5 523.5 Z" fill="#0000ff" shape-rendering="geometricPrecision"/><path d="M994 528.5 H1004.5 V543" fill="none" stroke="#0000ff" stroke-width="1"/><path d="M1001.0 541 H1008.0 L1004.5 545.5 Z" fill="#0000ff" shape-rendering="geometricPrecision"/><path d="M1129 550.5 H1134.5 V565" fill="none" stroke="#0000ff" stroke-width="1"/><path d="M1131.0 563 H1138.0 L1134.5 567.5 Z" fill="#0000ff" shape-rendering="geometricPrecision"/><path d="M1129.500 572.500 H1134.500 V714" fill="none" stroke="#0000ff"/><path d="M769.5 616.5 H774.5 V631" fill="none" stroke="#0000ff" stroke-width="1"/><path d="M771.0 629 H778.0 L774.5 633.5 Z" fill="#0000ff" shape-rendering="geometricPrecision"/><path d="M814 638.5 H819.5 V653" fill="none" stroke="#0000ff" stroke-width="1"/><path d="M816.0 651 H823.0 L819.5 655.5 Z" fill="#0000ff" shape-rendering="geometricPrecision"/><path d="M884 660.5 H889.5 V675" fill="none" stroke="#0000ff" stroke-width="1"/><path d="M886.0 673 H893.0 L889.5 677.5 Z" fill="#0000ff" shape-rendering="geometricPrecision"/><path d="M1029 682.5 H1034.5 V697" fill="none" stroke="#0000ff" stroke-width="1"/><path d="M1031.0 695 H1038.0 L1034.5 699.5 Z" fill="#0000ff" shape-rendering="geometricPrecision"/><path d="M1029.500 704.500 H1129.500" fill="none" stroke="#0000ff"/><rect x="734" y="259" width="30" height="11" fill="#5a96c8"/><rect x="734" y="259" width="30" height="1" fill="#a9c9e8"/><rect x="735" y="260" width="28" height="1" fill="#7fafdb"/><rect x="735" y="268" width="28" height="1" fill="#4880b8"/><rect x="734" y="260" width="1" height="9" fill="#93bce2"/><rect x="763" y="260" width="1" height="10" fill="#2f6398"/><rect x="734" y="269" width="30" height="1" fill="#2f6398"/><rect x="764" y="281" width="5" height="11" fill="#5a96c8"/><rect x="764" y="281" width="5" height="1" fill="#a9c9e8"/><rect x="765" y="282" width="3" height="1" fill="#7fafdb"/><rect x="765" y="290" width="3" height="1" fill="#4880b8"/><rect x="764" y="282" width="1" height="9" fill="#93bce2"/><rect x="768" y="282" width="1" height="10" fill="#2f6398"/><rect x="764" y="291" width="5" height="1" fill="#2f6398"/><rect x="769" y="369" width="70" height="11" fill="#5a96c8"/><rect x="769" y="369" width="70" height="1" fill="#a9c9e8"/><rect x="770" y="370" width="68" height="1" fill="#7fafdb"/><rect x="770" y="378" width="68" height="1" fill="#4880b8"/><rect x="769" y="370" width="1" height="9" fill="#93bce2"/><rect x="838" y="370" width="1" height="10" fill="#2f6398"/><rect x="769" y="379" width="70" height="1" fill="#2f6398"/><rect x="839" y="391" width="75" height="11" fill="#5a96c8"/><rect x="839" y="391" width="75" height="1" fill="#a9c9e8"/><rect x="840" y="392" width="73" height="1" fill="#7fafdb"/><rect x="840" y="400" width="73" height="1" fill="#4880b8"/><rect x="839" y="392" width="1" height="9" fill="#93bce2"/><rect x="913" y="392" width="1" height="10" fill="#2f6398"/><rect x="839" y="401" width="75" height="1" fill="#2f6398"/><rect x="914" y="413" width="70" height="11" fill="#5a96c8"/><rect x="914" y="413" width="70" height="1" fill="#a9c9e8"/><rect x="915" y="414" width="68" height="1" fill="#7fafdb"/><rect x="915" y="422" width="68" height="1" fill="#4880b8"/><rect x="914" y="414" width="1" height="9" fill="#93bce2"/><rect x="983" y="414" width="1" height="10" fill="#2f6398"/><rect x="914" y="423" width="70" height="1" fill="#2f6398"/><rect x="769" y="501" width="85" height="11" fill="#5a96c8"/><rect x="769" y="501" width="85" height="1" fill="#a9c9e8"/><rect x="770" y="502" width="83" height="1" fill="#7fafdb"/><rect x="770" y="510" width="83" height="1" fill="#4880b8"/><rect x="769" y="502" width="1" height="9" fill="#93bce2"/><rect x="853" y="502" width="1" height="10" fill="#2f6398"/><rect x="769" y="511" width="85" height="1" fill="#2f6398"/><rect x="864" y="523" width="130" height="11" fill="#5a96c8"/><rect x="864" y="523" width="130" height="1" fill="#a9c9e8"/><rect x="865" y="524" width="128" height="1" fill="#7fafdb"/><rect x="865" y="532" width="128" height="1" fill="#4880b8"/><rect x="864" y="524" width="1" height="9" fill="#93bce2"/><rect x="993" y="524" width="1" height="10" fill="#2f6398"/><rect x="864" y="533" width="130" height="1" fill="#2f6398"/><rect x="1004" y="545" width="125" height="11" fill="#5a96c8"/><rect x="1004" y="545" width="125" height="1" fill="#a9c9e8"/><rect x="1005" y="546" width="123" height="1" fill="#7fafdb"/><rect x="1005" y="554" width="123" height="1" fill="#4880b8"/><rect x="1004" y="546" width="1" height="9" fill="#93bce2"/><rect x="1128" y="546" width="1" height="10" fill="#2f6398"/><rect x="1004" y="555" width="125" height="1" fill="#2f6398"/><rect x="769" y="633" width="45" height="11" fill="#5a96c8"/><rect x="769" y="633" width="45" height="1" fill="#a9c9e8"/><rect x="770" y="634" width="43" height="1" fill="#7fafdb"/><rect x="770" y="642" width="43" height="1" fill="#4880b8"/><rect x="769" y="634" width="1" height="9" fill="#93bce2"/><rect x="813" y="634" width="1" height="10" fill="#2f6398"/><rect x="769" y="643" width="45" height="1" fill="#2f6398"/><rect x="814" y="655" width="70" height="11" fill="#5a96c8"/><rect x="814" y="655" width="70" height="1" fill="#a9c9e8"/><rect x="815" y="656" width="68" height="1" fill="#7fafdb"/><rect x="815" y="664" width="68" height="1" fill="#4880b8"/><rect x="814" y="656" width="1" height="9" fill="#93bce2"/><rect x="883" y="656" width="1" height="10" fill="#2f6398"/><rect x="814" y="665" width="70" height="1" fill="#2f6398"/><rect x="884" y="677" width="145" height="11" fill="#5a96c8"/><rect x="884" y="677" width="145" height="1" fill="#a9c9e8"/><rect x="885" y="678" width="143" height="1" fill="#7fafdb"/><rect x="885" y="686" width="143" height="1" fill="#4880b8"/><rect x="884" y="678" width="1" height="9" fill="#93bce2"/><rect x="1028" y="678" width="1" height="10" fill="#2f6398"/><rect x="884" y="687" width="145" height="1" fill="#2f6398"/><g shape-rendering="geometricPrecision"><path d="M744.5 239 V251.5" stroke="#000" stroke-width="1"/><path d="M737.7 251.5 H751.3 L744.5 265 Z" fill="#90ee90" stroke="#000" stroke-width=".9"/></g><g shape-rendering="geometricPrecision"><path d="M754.5 239 V251.5" stroke="#000" stroke-width="1"/><path d="M747.7 251.5 H761.3 L754.5 265 Z" fill="#90ee90" stroke="#000" stroke-width=".9"/></g><g shape-rendering="geometricPrecision"><path d="M811.5 481 V493.5" stroke="#000" stroke-width="1"/><path d="M804.7 493.5 H818.3 L811.5 507 Z" fill="#90ee90" stroke="#000" stroke-width=".9"/></g><g shape-rendering="geometricPrecision"><path d="M929.5 503 V515.5" stroke="#000" stroke-width="1"/><path d="M922.7 515.5 H936.3 L929.5 529 Z" fill="#90ee90" stroke="#000" stroke-width=".9"/></g><g shape-rendering="geometricPrecision"><path d="M1066.5 525 V537.5" stroke="#000" stroke-width="1"/><path d="M1059.7 537.5 H1073.3 L1066.5 551 Z" fill="#90ee90" stroke="#000" stroke-width=".9"/></g><g shape-rendering="geometricPrecision"><path d="M791.5 613 V625.5" stroke="#000" stroke-width="1"/><path d="M784.7 625.5 H798.3 L791.5 639 Z" fill="#90ee90" stroke="#000" stroke-width=".9"/></g><g shape-rendering="geometricPrecision"><path d="M956.5 657 V669.5" stroke="#000" stroke-width="1"/><path d="M949.7 669.5 H963.3 L956.5 683 Z" fill="#90ee90" stroke="#000" stroke-width=".9"/></g></g></svg>
<div class="chk" style="left:699px;top:714px;width:857px;height:16px;"></div>
<div class="sbtn" style="left:699px;top:714px;width:16px;height:16px;"></div>
<div class="sbtn" style="left:715px;top:714px;width:18px;height:16px;"></div>
<div class="sbtn" style="left:1539px;top:714px;width:17px;height:16px;"></div>
<svg style="left:699px;top:714px" width="857" height="16" viewBox="0 0 857 16"><path d="M10.500 3.500 v8 l-4 -4 z" fill="#000"/><path d="M846.500 3.500 v8 l4 -4 z" fill="#000"/></svg>
<div class="chk" style="left:1556px;top:150px;width:17px;height:564px;"></div>
<div class="sbtn" style="left:1556px;top:150px;width:17px;height:16px;"></div>
<div class="sbtn" style="left:1556px;top:166px;width:17px;height:17px;"></div>
<div class="sbtn" style="left:1556px;top:698px;width:17px;height:16px;"></div>
<svg style="left:1556px;top:150px" width="17" height="564" viewBox="0 0 17 564"><path d="M4.500 10.500 h8 l-4 -4 z" fill="#000"/><path d="M4.500 553.500 h8 l-4 4 z" fill="#000"/></svg>
<div style="left:1556px;top:714px;width:17px;height:16px;background:#f0f0f0;"></div>
<div style="left:1573px;top:33px;width:1px;height:718px;background:#f0f0f0;"></div>
<div style="left:1px;top:731px;width:1573px;height:20px;background:#f0f0f0;"></div>
<span class="t" style="left:5.20px;top:737.97px;font-size:11.5px;line-height:11.5px;color:#000;transform:scaleX(0.9383);">Ready</span>
<div class="pane" style="left:1104px;top:734px;width:62px;height:18px;"></div>
<div class="pane" style="left:1167px;top:734px;width:4px;height:18px;"></div>
<div class="pane" style="left:1172px;top:734px;width:86px;height:18px;"></div>
<div class="pane" style="left:1259px;top:734px;width:59px;height:18px;"></div>
<div class="pane" style="left:1319px;top:734px;width:25px;height:18px;"></div>
<div class="pane" style="left:1345px;top:734px;width:30px;height:18px;"></div>
<div class="pane" style="left:1377px;top:734px;width:30px;height:18px;"></div>
<div class="pane" style="left:1408px;top:734px;width:89px;height:18px;"></div>
<div class="pane" style="left:1498px;top:734px;width:60px;height:18px;"></div>
<span class="t" style="left:1175.00px;top:737.97px;font-size:11.5px;line-height:11.5px;color:#000;">Result Gantt</span>
<span class="t" style="left:1321.40px;top:737.97px;font-size:11.5px;line-height:11.5px;color:#8a8a8a;transform:scaleX(0.8285);">CAP</span>
<span class="t" style="left:1347.60px;top:737.97px;font-size:11.5px;line-height:11.5px;color:#000;transform:scaleX(0.9465);">NUM</span>
<span class="t" style="left:1379.40px;top:737.97px;font-size:11.5px;line-height:11.5px;color:#8a8a8a;transform:scaleX(0.7886);">SCRL</span>
<span class="t" style="left:1410.40px;top:737.97px;font-size:11.5px;line-height:11.5px;color:#000;transform:scaleX(0.9316);">Tue, Jun 13,2017</span>
<span class="t" style="left:1500.40px;top:737.97px;font-size:11.5px;line-height:11.5px;color:#000;transform:scaleX(0.9179);">3:15:41 PM</span>
<svg style="left:1560px;top:738px" width="13" height="13" viewBox="0 0 13 13"><path d="M12 1 L1 12 M12 5 L5 12 M12 9 L9 12" stroke="#a0a0a0" stroke-width="1"/></svg>
</div>
</body></html>
